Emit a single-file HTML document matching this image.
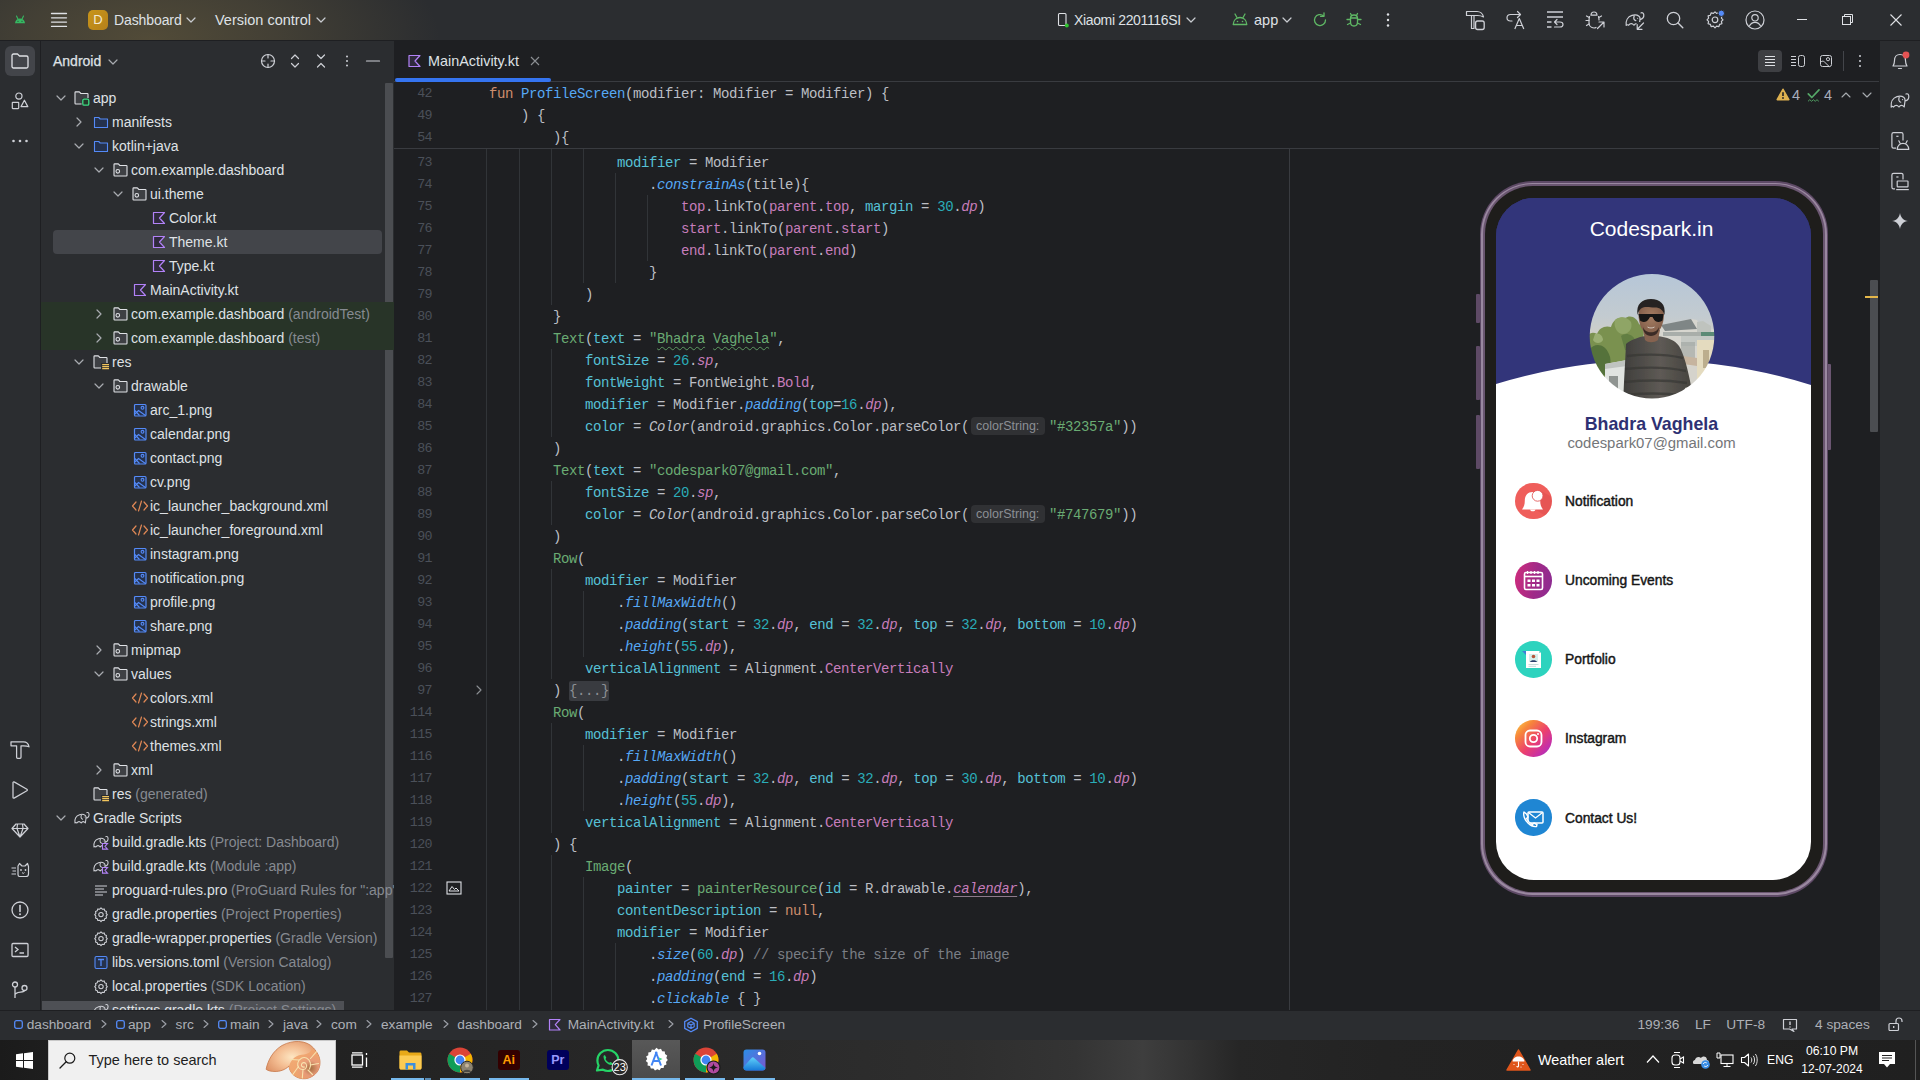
<!DOCTYPE html>
<html><head><meta charset="utf-8"><title>Android Studio</title>
<style>
html,body{margin:0;padding:0;}
body{width:1920px;height:1080px;overflow:hidden;background:#1E1F22;font-family:"Liberation Sans",sans-serif;}
#root{position:relative;width:1920px;height:1080px;overflow:hidden;}
.a{position:absolute;}
.ui{color:#DFE1E5;font-size:14px;white-space:pre;}
.g{color:#868A91;}
svg{position:absolute;overflow:visible;}
.ic{fill:none;stroke:#CED0D6;stroke-width:1.2;stroke-linecap:round;stroke-linejoin:round;}
/* code */
.code{position:absolute;font-family:"Liberation Mono",monospace;font-size:14px;letter-spacing:-0.4px;line-height:22px;color:#BCBEC4;white-space:pre;}
.k{color:#CF8E6D}.f{color:#56A8F5}.n{color:#56C1D6}.s{color:#6AAB73}.u{color:#2AACB8}
.e{color:#56A8F5;font-style:italic}.p{color:#C77DBB}.pi{color:#C77DBB;font-style:italic}
.c{color:#6AAB73}.it{font-style:italic}.cm{color:#7A7E85}
.ln{position:absolute;font-family:"Liberation Mono",monospace;font-size:13.3px;letter-spacing:-0.6px;line-height:22px;color:#4B5059;white-space:pre;text-align:right;width:60px;}
.wv{text-decoration:underline wavy #5E9A62;text-decoration-thickness:1px;text-underline-offset:3px;}
.ul{text-decoration:underline #8D7A8B;text-underline-offset:3px;}
.fold{background:#393B40;color:#8C8F94;border-radius:2px;padding:2px 0;}

</style></head>
<body>
<div id="root">
<!-- main toolbar -->
<div class="a" style="left:0;top:0;width:1920px;height:40px;background:#2B2D30;"></div>
<div class="a" style="left:0;top:0;width:700px;height:40px;background:radial-gradient(ellipse 290px 130px at 150px 40px, rgba(150,128,70,0.36) 0%, rgba(150,128,70,0.22) 45%, rgba(150,128,70,0) 100%);"></div>
<div class="a" style="left:0;top:40px;width:1920px;height:1px;background:#1E1F22;"></div>
<!-- android logo -->
<svg style="left:14px;top:15px" width="12" height="9" viewBox="0 0 12 9"><path d="M1 8.3 C1.2 5.5 3.3 3.6 6 3.6 C8.7 3.6 10.8 5.5 11 8.3 Z" fill="#36B862"/><path d="M2.5 1 L3.8 3.8 M9.5 1 L8.2 3.8" stroke="#36B862" stroke-width="1.1" stroke-linecap="round"/><circle cx="4" cy="6.3" r="0.55" fill="#2B2D30"/><circle cx="8" cy="6.3" r="0.55" fill="#2B2D30"/></svg>
<!-- hamburger -->
<svg style="left:50px;top:11px" width="18" height="18" viewBox="0 0 18 18"><path d="M1.5 2.5h15M1.5 6.8h15M1.5 11.1h15M1.5 15.4h15" fill="none" stroke="#DFE1E5" stroke-width="1.3" stroke-linecap="round"/></svg>
<!-- project badge -->
<div class="a" style="left:88px;top:10px;width:20px;height:20px;border-radius:5px;background:linear-gradient(135deg,#C8951A,#B5801A);"></div>
<div class="a" style="left:88px;top:10px;width:20px;height:20px;line-height:20px;text-align:center;color:#F4EBD4;font-size:13px;">D</div>
<div class="a ui" style="left:114px;top:8px;line-height:24px;font-size:14px;letter-spacing:-0.1px;">Dashboard</div>
<svg style="left:186px;top:15px" width="10" height="10" viewBox="0 0 10 10"><path d="M1 3 L5 7 L9 3" fill="none" stroke="#C9CCD1" stroke-width="1.2" stroke-linecap="round" stroke-linejoin="round"/></svg>
<div class="a ui" style="left:215px;top:8px;line-height:24px;font-size:14.5px;">Version control</div>
<svg style="left:316px;top:15px" width="10" height="10" viewBox="0 0 10 10"><path d="M1 3 L5 7 L9 3" fill="none" stroke="#C9CCD1" stroke-width="1.2" stroke-linecap="round" stroke-linejoin="round"/></svg>
<!-- device selector -->
<svg style="left:1056px;top:12px" width="14" height="16" viewBox="0 0 14 16"><rect x="2.5" y="1.5" width="7.5" height="12" rx="1" fill="none" stroke="#DFE1E5" stroke-width="1.1"/><circle cx="10.8" cy="13.6" r="2" fill="#2FC42F"/></svg>
<div class="a ui" style="left:1074px;top:8px;line-height:24px;font-size:14px;letter-spacing:-0.35px;">Xiaomi 2201116SI</div>
<svg style="left:1186px;top:15px" width="10" height="10" viewBox="0 0 10 10"><path d="M1 3 L5 7 L9 3" fill="none" stroke="#C9CCD1" stroke-width="1.2" stroke-linecap="round" stroke-linejoin="round"/></svg>
<svg style="left:1231px;top:12px" width="18" height="14" viewBox="0 0 18 14"><path d="M2.2 12.5 C2.5 8.2 5.3 5.5 9 5.5 C12.7 5.5 15.5 8.2 15.8 12.5 Z" fill="none" stroke="#5FB865" stroke-width="1.3" stroke-linejoin="round"/><path d="M4 2 L5.8 5.2 M14 2 L12.2 5.2" stroke="#5FB865" stroke-width="1.3" stroke-linecap="round"/><circle cx="6.5" cy="9.5" r="0.8" fill="#5FB865"/><circle cx="11.5" cy="9.5" r="0.8" fill="#5FB865"/></svg>
<div class="a ui" style="left:1254px;top:8px;line-height:24px;font-size:14.5px;">app</div>
<svg style="left:1282px;top:15px" width="10" height="10" viewBox="0 0 10 10"><path d="M1 3 L5 7 L9 3" fill="none" stroke="#C9CCD1" stroke-width="1.2" stroke-linecap="round" stroke-linejoin="round"/></svg>
<!-- rerun -->
<svg style="left:1312px;top:12px" width="16" height="16" viewBox="0 0 16 16"><path d="M13.5 8 A5.5 5.5 0 1 1 11.6 3.9" fill="none" stroke="#5FB865" stroke-width="1.3" stroke-linecap="round"/><path d="M12 0.8 V4.3 H8.5" fill="none" stroke="#5FB865" stroke-width="1.3" stroke-linecap="round" stroke-linejoin="round"/></svg>
<!-- debug -->
<svg style="left:1345px;top:11px" width="18" height="18" viewBox="0 0 18 18"><path d="M5.5 7.5 C5.5 5.2 7 4 9 4 C11 4 12.5 5.2 12.5 7.5 V11 C12.5 13.5 11 15 9 15 C7 15 5.5 13.5 5.5 11 Z" fill="none" stroke="#5FB865" stroke-width="1.3"/><path d="M6.5 4.5 L5.5 2.5 M11.5 4.5 L12.5 2.5 M5.5 8.5 H2 M12.5 8.5 H16 M5.5 12 L2.5 13.5 M12.5 12 L15.5 13.5 M5.5 7 H12.5" fill="none" stroke="#5FB865" stroke-width="1.3" stroke-linecap="round"/></svg>
<svg style="left:1380px;top:12px" width="16" height="16" viewBox="0 0 16 16"><circle cx="8" cy="2.5" r="1.2" fill="#DFE1E5"/><circle cx="8" cy="8" r="1.2" fill="#DFE1E5"/><circle cx="8" cy="13.5" r="1.2" fill="#DFE1E5"/></svg>
<!-- right toolbar icons -->
<svg style="left:1465px;top:10px" width="20" height="20" viewBox="0 0 20 20"><path d="M1.5 1.5 H12 C15 1.5 17.8 3.8 18.5 7 C16.8 6 14.8 5.5 12.5 5.5 H1.5 Z" fill="none" stroke="#CED0D6" stroke-width="1.2" stroke-linejoin="round"/><path d="M6.5 5.5 V18.5 H9 V5.5" fill="none" stroke="#CED0D6" stroke-width="1.2" stroke-linejoin="round"/><rect x="10.6" y="11" width="8.6" height="8.5" rx="2" fill="#2B2D30" stroke="#CED0D6" stroke-width="1.3"/></svg>
<svg style="left:1505px;top:10px" width="20" height="20" viewBox="0 0 20 20"><path d="M15.5 4.5 H5.5 C3.5 4.5 2 5.8 2 7.8 C2 9.8 3.5 11 5.5 11 H7 M12.5 1.5 L15.5 4.5 L12.5 7.5" fill="none" stroke="#CED0D6" stroke-width="1.2" stroke-linecap="round" stroke-linejoin="round"/><path d="M9.8 19 L14.3 8.5 L18.8 19 M11.3 15.5 H17.3" fill="none" stroke="#CED0D6" stroke-width="1.2" stroke-linejoin="round"/></svg>
<svg style="left:1545px;top:10px" width="20" height="20" viewBox="0 0 20 20"><path d="M2 2 H18 M2 7 H18 M2 12 H6.5 M2 17 H6.5" fill="none" stroke="#CED0D6" stroke-width="1.3"/><path d="M12 9.5 L9.5 12 L12 14.5 M9.5 12 H15 C16.7 12 18 13.1 18 14.5 C18 15.9 16.7 17 15 17 H9.5" fill="none" stroke="#CED0D6" stroke-width="1.2" stroke-linecap="round" stroke-linejoin="round"/></svg>
<svg style="left:1585px;top:10px" width="20" height="20" viewBox="0 0 20 20"><path d="M6 5.2 C6 3.3 7.4 2 9 2 C10.6 2 12 3.3 12 5.2 Z M4.5 6.5 C4 8 4 11 4 12.5 C4 15.5 6 18 9 18 C9.8 18 10.5 17.8 11 17.5 M13.5 6.5 C13.8 7.5 14 9 14 10" fill="none" stroke="#CED0D6" stroke-width="1.2" stroke-linecap="round" stroke-linejoin="round"/><path d="M4.2 7.5 L1.5 6 M13.8 7.5 L16.5 6 M4 10.5 H1 M4 14 L1.5 15.5" fill="none" stroke="#CED0D6" stroke-width="1.2" stroke-linecap="round"/><path d="M12.5 18.5 L18.5 12.5 M14 12 H19 V17" fill="none" stroke="#CED0D6" stroke-width="1.2" stroke-linecap="round" stroke-linejoin="round"/></svg>
<svg style="left:1625px;top:10px" width="20" height="20" viewBox="0 0 20 20"><g transform="translate(0,1) scale(1,0.95)"><path d="M1.2 15 C0.6 10.5 2.5 6 7 4.6 C10 3.7 12.3 4.2 14 5.5 C15 6.3 15.2 7.5 15 9 L14.2 15 C13.4 14 12.6 13.3 11.6 13.3 C10.6 13.3 9.6 14 9 15 C8.2 14 7.3 13.3 6.3 13.3 C5.3 13.3 4.2 14 3.6 15 C2.8 14.3 2 14.3 1.2 15 Z M15 9 C17.5 8.5 19 6.5 18.8 4 C18.6 2.3 17.3 1.3 16 2 M9.2 5.2 C8.3 7.6 8.8 9.6 10.8 10.2" fill="none" stroke="#CED0D6" stroke-width="1.25" stroke-linejoin="round" stroke-linecap="round"/><circle cx="12.6" cy="7.6" r="0.6" fill="#CED0D6"/></g><rect x="11.5" y="12" width="9" height="9" fill="#2B2D30"/><path d="M12.5 19 L18.5 13 M12.2 14.5 V19.3 H17" fill="none" stroke="#CED0D6" stroke-width="1.2" stroke-linecap="round" stroke-linejoin="round"/></svg>
<svg style="left:1665px;top:10px" width="20" height="20" viewBox="0 0 20 20"><circle cx="8.5" cy="8.5" r="6.2" fill="none" stroke="#CED0D6" stroke-width="1.3"/><path d="M13 13 L17.8 17.8" stroke="#CED0D6" stroke-width="1.4" stroke-linecap="round"/></svg>
<svg style="left:1705px;top:10px" width="20" height="20" viewBox="0 0 20 20"><path d="M10 1.8 L11.6 3.4 L13.9 2.9 L14.6 5.2 L16.9 5.9 L16.4 8.2 L18 9.8 L16.4 11.4 L16.9 13.7 L14.6 14.4 L13.9 16.7 L11.6 16.2 L10 17.8 L8.4 16.2 L6.1 16.7 L5.4 14.4 L3.1 13.7 L3.6 11.4 L2 9.8 L3.6 8.2 L3.1 5.9 L5.4 5.2 L6.1 2.9 L8.4 3.4 Z" fill="none" stroke="#CED0D6" stroke-width="1.2" stroke-linejoin="round"/><circle cx="10" cy="9.8" r="2.8" fill="none" stroke="#CED0D6" stroke-width="1.2"/><circle cx="16.3" cy="3.3" r="3.2" fill="#548AF7" stroke="#2B2D30" stroke-width="1"/></svg>
<svg style="left:1745px;top:10px" width="20" height="20" viewBox="0 0 20 20"><circle cx="10" cy="10" r="9" fill="none" stroke="#CED0D6" stroke-width="1.2"/><circle cx="10" cy="7.8" r="3.2" fill="none" stroke="#CED0D6" stroke-width="1.2"/><path d="M4.3 16.2 C5.5 13.5 7.5 12.3 10 12.3 C12.5 12.3 14.5 13.5 15.7 16.2" fill="none" stroke="#CED0D6" stroke-width="1.2"/></svg>
<!-- window controls -->
<div class="a" style="left:1797px;top:19px;width:10px;height:1px;background:#DFE1E5;"></div>
<svg style="left:1841px;top:13px" width="14" height="14" viewBox="0 0 14 14"><rect x="1.5" y="3.5" width="8" height="8" fill="none" stroke="#DFE1E5" stroke-width="1"/><path d="M3.5 3.5 V1.5 H11.5 V9.5 H9.5" fill="none" stroke="#DFE1E5" stroke-width="1"/></svg>
<svg style="left:1889px;top:13px" width="14" height="14" viewBox="0 0 14 14"><path d="M1.5 1.5 L12.5 12.5 M12.5 1.5 L1.5 12.5" fill="none" stroke="#DFE1E5" stroke-width="1.1"/></svg>

<div class="a" style="left:0;top:41px;width:40px;height:969px;background:#2B2D30;"></div>
<div class="a" style="left:40px;top:41px;width:1px;height:969px;background:#1E1F22;"></div>
<div class="a" style="left:5px;top:46px;width:30px;height:30px;border-radius:6px;background:#43454A;"></div>
<svg style="left:10px;top:51px" width="20" height="20" viewBox="0 0 20 20"><path d="M2 4.5 C2 3.7 2.7 3 3.5 3 H7.5 L9.5 5 H16.5 C17.3 5 18 5.7 18 6.5 V15.5 C18 16.3 17.3 17 16.5 17 H3.5 C2.7 17 2 16.3 2 15.5 Z" fill="none" stroke="#DFE1E5" stroke-width="1.3" stroke-linejoin="round"/></svg>
<svg style="left:10px;top:91px" width="20" height="20" viewBox="0 0 20 20"><circle cx="8.9" cy="5.1" r="3.1" fill="none" stroke="#CED0D6" stroke-width="1.2"/><rect x="2.3" y="11.3" width="6.4" height="6.3" rx="0.5" fill="none" stroke="#CED0D6" stroke-width="1.2"/><path d="M14.4 9.2 L17.8 15.6 H11 Z" fill="none" stroke="#CED0D6" stroke-width="1.2" stroke-linejoin="round"/></svg>
<svg style="left:10px;top:131px" width="20" height="20" viewBox="0 0 20 20"><circle cx="3.5" cy="10" r="1.3" fill="#CED0D6"/><circle cx="10" cy="10" r="1.3" fill="#CED0D6"/><circle cx="16.5" cy="10" r="1.3" fill="#CED0D6"/></svg>
<!-- bottom left strip icons -->
<svg style="left:10px;top:740px" width="20" height="20" viewBox="0 0 20 20"><path d="M1 1.8 H13.5 C16.5 1.8 18.5 3.8 19 6.8 C17.5 6 15.5 5.8 13.5 5.8 H11 V17.3 C11 17.9 10.6 18.3 10 18.3 H7.6 C7 18.3 6.6 17.9 6.6 17.3 V5.8 H1 Z" fill="none" stroke="#CED0D6" stroke-width="1.25" stroke-linejoin="round"/></svg>
<svg style="left:10px;top:780px" width="20" height="20" viewBox="0 0 20 20"><path d="M3 2.6 V17.4 C3 18 3.6 18.4 4.1 18.1 L16.9 10.8 C17.5 10.5 17.5 9.6 16.9 9.2 L4.1 1.9 C3.6 1.6 3 2 3 2.6 Z" fill="none" stroke="#CED0D6" stroke-width="1.25" stroke-linejoin="round"/></svg>
<svg style="left:10px;top:820px" width="20" height="20" viewBox="0 0 20 20"><path d="M6 4 H14 L18 8.5 L10 17 L2 8.5 Z M2 8.5 H18 M7 8.5 L10 17 L13 8.5 M7.5 4 L7 8.5 M12.5 4 L13 8.5" fill="none" stroke="#CED0D6" stroke-width="1.2" stroke-linejoin="round"/></svg>
<svg style="left:10px;top:860px" width="20" height="20" viewBox="0 0 20 20"><path d="M8 6 L9.5 3.5 L12 6 H15 L17.5 3.5 L18.5 6.5 V14 C18.5 15.5 17.5 16.5 16 16.5 H9.5 C8.5 16.5 8 15.5 8 14.5 Z" fill="none" stroke="#CED0D6" stroke-width="1.2" stroke-linejoin="round"/><path d="M1.5 8 H6 M2.5 11 H6 M1.5 14 H6" stroke="#CED0D6" stroke-width="1.2"/><circle cx="11" cy="10" r="0.9" fill="#CED0D6"/><circle cx="15.5" cy="10" r="0.9" fill="#CED0D6"/><path d="M12 12.5 L13.2 13.5 L14.5 12.5" fill="none" stroke="#CED0D6" stroke-width="1"/></svg>
<svg style="left:10px;top:900px" width="20" height="20" viewBox="0 0 20 20"><circle cx="10" cy="10" r="8" fill="none" stroke="#CED0D6" stroke-width="1.3"/><path d="M10 5.5 V11.5" stroke="#CED0D6" stroke-width="1.6" stroke-linecap="round"/><circle cx="10" cy="14.3" r="1" fill="#CED0D6"/></svg>
<svg style="left:10px;top:940px" width="20" height="20" viewBox="0 0 20 20"><rect x="2" y="3.5" width="16" height="13" rx="1" fill="none" stroke="#CED0D6" stroke-width="1.3"/><path d="M5 7 L8 9.5 L5 12 M9.5 13 H14" fill="none" stroke="#CED0D6" stroke-width="1.3"/></svg>
<svg style="left:10px;top:980px" width="20" height="20" viewBox="0 0 20 20"><circle cx="5" cy="4.5" r="2.5" fill="none" stroke="#CED0D6" stroke-width="1.3"/><circle cx="14.5" cy="8" r="2.5" fill="none" stroke="#CED0D6" stroke-width="1.3"/><path d="M5 7 V18 M5 15 C5 11 14.5 13 14.5 10.5" fill="none" stroke="#CED0D6" stroke-width="1.3"/></svg>

<div class="a" style="left:41px;top:41px;width:353px;height:969px;background:#2B2D30;"></div>
<div class="a" style="left:385px;top:83px;width:8px;height:875px;background:#4B4D51;border-radius:1px;"></div>
<div class="a" style="left:42px;top:1001px;width:302px;height:9px;background:rgba(85,87,92,0.85);"></div>
<!-- tree header -->
<div class="a ui" style="left:53px;top:49px;line-height:24px;color:#DFE1E5;-webkit-text-stroke:0.25px #DFE1E5;">Android</div>
<svg style="left:108px;top:57px" width="10" height="10" viewBox="0 0 10 10"><path d="M1 3 L5 7 L9 3" fill="none" stroke="#A8ABB0" stroke-width="1.2" stroke-linecap="round" stroke-linejoin="round"/></svg>
<svg style="left:260px;top:53px" width="16" height="16" viewBox="0 0 16 16"><circle cx="8" cy="8" r="6.5" class="ic"/><path d="M8 1.5v3.5M8 11v3.5M1.5 8h3.5M11 8h3.5" class="ic"/></svg>
<svg style="left:287px;top:53px" width="16" height="16" viewBox="0 0 16 16"><path d="M4.5 5.5 L8 2 L11.5 5.5 M4.5 10.5 L8 14 L11.5 10.5" class="ic"/></svg>
<svg style="left:313px;top:53px" width="16" height="16" viewBox="0 0 16 16"><path d="M4.5 2 L8 5.5 L11.5 2 M4.5 14 L8 10.5 L11.5 14" class="ic"/></svg>
<svg style="left:339px;top:53px" width="16" height="16" viewBox="0 0 16 16"><circle cx="8" cy="3.5" r="1" fill="#CED0D6"/><circle cx="8" cy="8" r="1" fill="#CED0D6"/><circle cx="8" cy="12.5" r="1" fill="#CED0D6"/></svg>
<svg style="left:365px;top:53px" width="16" height="16" viewBox="0 0 16 16"><path d="M1.5 8h13" class="ic"/></svg>

<!-- editor tab bar -->
<div class="a" style="left:394px;top:81px;width:1485px;height:1px;background:#393B40;"></div>
<div class="a" style="left:395px;top:78px;width:156px;height:4px;background:#3574F0;border-radius:2px;"></div>
<svg style="left:407px;top:53px" width="16" height="16" viewBox="0 0 16 16"><path d="M2 2.5 h11 l-5 5.5 l5 5.5 h-11 z" fill="#2F2A3D" stroke="#B282F7" stroke-width="1.2" stroke-linejoin="round"/></svg>
<div class="a ui" style="left:428px;top:49px;line-height:24px;font-size:14.4px;">MainActivity.kt</div>
<svg style="left:529px;top:55px" width="12" height="12" viewBox="0 0 12 12"><path d="M2 2 L10 10 M10 2 L2 10" fill="none" stroke="#8C8F94" stroke-width="1.1"/></svg>
<!-- tab bar right icons -->
<div class="a" style="left:1758px;top:50px;width:24px;height:22px;background:#3E3F43;border-radius:4px;"></div>
<svg style="left:1762px;top:53px" width="16" height="16" viewBox="0 0 16 16"><path d="M3 3.5h10M3 6.5h10M3 9.5h10M3 12.5h10" fill="none" stroke="#DFE1E5" stroke-width="1"/></svg>
<svg style="left:1790px;top:53px" width="16" height="16" viewBox="0 0 16 16"><path d="M1 3.5h5M1 6.5h5M1 9.5h5M1 12.5h5" fill="none" stroke="#CED0D6" stroke-width="1"/><rect x="8.5" y="2.5" width="6" height="11" rx="2" fill="none" stroke="#CED0D6" stroke-width="1"/></svg>
<svg style="left:1818px;top:53px" width="16" height="16" viewBox="0 0 16 16"><rect x="2.5" y="2.5" width="11" height="11" rx="2" fill="none" stroke="#CED0D6" stroke-width="1"/><circle cx="10" cy="6.2" r="1.6" fill="none" stroke="#CED0D6" stroke-width="1"/><path d="M2.8 9 C4.3 7.8 5.5 8 6.5 9 L11.5 13.8" fill="none" stroke="#CED0D6" stroke-width="1"/></svg>
<div class="a" style="left:1843px;top:51px;width:1px;height:20px;background:#43454A;"></div>
<svg style="left:1852px;top:53px" width="16" height="16" viewBox="0 0 16 16"><circle cx="8" cy="3" r="1" fill="#CED0D6"/><circle cx="8" cy="8" r="1" fill="#CED0D6"/><circle cx="8" cy="13" r="1" fill="#CED0D6"/></svg>
<!-- sticky border, margin line -->
<div class="a" style="left:394px;top:148px;width:1485px;height:1px;background:#393B40;"></div>
<div class="a" style="left:1289px;top:149px;width:1px;height:861px;background:#393B40;"></div>
<!-- inspection widget -->
<svg style="left:1776px;top:88px" width="14" height="13" viewBox="0 0 14 13"><path d="M7 1.3 L12.8 11.6 H1.2 Z" fill="#DDB04F" stroke="#DDB04F" stroke-width="1.6" stroke-linejoin="round"/><path d="M7 4.2v3.8" stroke="#1E1F22" stroke-width="1.6"/><circle cx="7" cy="10" r="0.9" fill="#1E1F22"/></svg>
<div class="a ui" style="left:1792px;top:83px;line-height:24px;font-size:14.5px;color:#A8ADBD;">4</div>
<svg style="left:1806px;top:87px" width="16" height="16" viewBox="0 0 16 16"><path d="M2.3 6.8 L5.8 10.5 L13 2.8" fill="none" stroke="#55A868" stroke-width="1.7" stroke-linecap="round" stroke-linejoin="round"/><path d="M2 14.3 l1.8 -1.6 l1.8 1.6 l1.8 -1.6 l1.8 1.6 l1.8 -1.6 l1.8 1.6" fill="none" stroke="#55A868" stroke-width="0.9"/></svg>
<div class="a ui" style="left:1824px;top:83px;line-height:24px;font-size:14.5px;color:#A8ADBD;">4</div>
<svg style="left:1841px;top:90px" width="10" height="10" viewBox="0 0 10 10"><path d="M1 7 L5 3 L9 7" fill="none" stroke="#A8ABB0" stroke-width="1.1" stroke-linecap="round" stroke-linejoin="round"/></svg>
<svg style="left:1862px;top:90px" width="10" height="10" viewBox="0 0 10 10"><path d="M1 3 L5 7 L9 3" fill="none" stroke="#A8ABB0" stroke-width="1.1" stroke-linecap="round" stroke-linejoin="round"/></svg>
<!-- editor scrollbar -->
<div class="a" style="left:1870px;top:280px;width:8px;height:152px;background:#4B4D51;border-radius:1px;"></div>
<div class="a" style="left:1865px;top:296px;width:13px;height:2px;background:#E5B74A;"></div>

<!-- phone preview -->
<div class="a" style="left:1475.6px;top:294px;width:4px;height:29px;background:#5E4A66;border-radius:1px;"></div>
<div class="a" style="left:1475.6px;top:346px;width:4px;height:54px;background:#5E4A66;border-radius:1px;"></div>
<div class="a" style="left:1475.6px;top:415px;width:4px;height:54px;background:#5E4A66;border-radius:1px;"></div>
<div class="a" style="left:1827px;top:364px;width:4px;height:86px;background:#6B5672;border-radius:1px;"></div>
<div class="a" style="left:1479.5px;top:181px;width:348.5px;height:715.5px;border-radius:53px;background:#5E4A66;"></div>
<div class="a" style="left:1481px;top:182.5px;width:345.5px;height:712.5px;border-radius:51.5px;background:#9A88A0;"></div>
<div class="a" style="left:1482.6px;top:184.1px;width:342.3px;height:709.3px;border-radius:50px;background:#6A5670;"></div>
<div class="a" style="left:1484.5px;top:186px;width:338.5px;height:705.5px;border-radius:48px;background:#1E1D1B;"></div>
<div class="a" style="left:1496px;top:198px;width:315px;height:681.5px;border-radius:38px;background:linear-gradient(to bottom,#32357A 0,#32357A 150px,#FFFFFF 150px);overflow:hidden;">
  <svg style="left:0;top:0" width="315" height="682" viewBox="0 0 315 682"><path d="M0 0 H315 V187 Q157 138 0 186 Z" fill="#32357A"/></svg>
  <div class="a" style="left:-2px;top:17px;width:315px;text-align:center;color:#FFFFFF;font-size:21px;line-height:28px;">Codespark.in</div>
  <div class="a" style="left:-2px;top:214px;width:315px;text-align:center;color:#2E3173;font-size:17.8px;font-weight:bold;line-height:24px;">Bhadra Vaghela</div>
  <div class="a" style="left:-2px;top:235px;width:315px;text-align:center;color:#747679;font-size:14.9px;line-height:20px;letter-spacing:0px;">codespark07@gmail.com</div>
</div>
<svg style="left:1585px;top:270px" width="135" height="135" viewBox="0 0 135 135">
  <defs>
    <clipPath id="pc"><circle cx="67" cy="66.3" r="62.3"/></clipPath><filter id="pblur" x="-5%" y="-5%" width="110%" height="110%"><feGaussianBlur stdDeviation="0.45"/></filter>
    <linearGradient id="sky" x1="0" y1="0" x2="0" y2="1"><stop offset="0" stop-color="#B4C6D9"/><stop offset="0.35" stop-color="#C3CBD0"/><stop offset="0.55" stop-color="#D6D0C4"/><stop offset="1" stop-color="#DCCDB6"/></linearGradient>
    <linearGradient id="swt" x1="0" y1="0" x2="1" y2="0"><stop offset="0" stop-color="#3F3E3C"/><stop offset="0.55" stop-color="#5E5A55"/><stop offset="1" stop-color="#46443F"/></linearGradient>
    <radialGradient id="face" cx="0.5" cy="0.45" r="0.6"><stop offset="0" stop-color="#A57D63"/><stop offset="1" stop-color="#7E5A47"/></radialGradient>
  </defs>
  <g clip-path="url(#pc)"><g filter="url(#pblur)">
    <rect x="-2" y="-2" width="139" height="139" fill="url(#sky)"/>
    <!-- building right -->
    <path d="M74 56 L106 49 L112 50 L118 62 L132 58 V135 H74 Z" fill="#D7D6CF"/>
    <path d="M76 55 L106 49 L112 59 L80 61 Z" fill="#7F8686"/>
    <path d="M78 62 H132 V66 H78 Z" fill="#A9AEAA"/>
    <path d="M112 52 L118 51 L126 56 V62 H112 Z" fill="#BFC3BE"/>
    <path d="M116 62 H132 V68 H116 Z" fill="#5C8A76"/>
    <path d="M96 66 H132 V76 H96 Z" fill="#C4C8C4"/>
    <path d="M96 72 V90 H110 V72 Z" fill="#9EA3A0" opacity="0.6"/>
    <path d="M112 70 H132 V135 H112 Z" fill="#E4DBBF"/>
    <path d="M118 80 H124 V98 H118 Z" fill="#BCAE8E"/>
    <path d="M98 86 L112 88 V96 L98 94 Z" fill="#C6B49F"/>
    <path d="M100 96 H112 V135 H100 Z" fill="#D5D3CC"/>
    <!-- trees -->
    <path d="M3 66 C5 62 9 62 12 64 C14 58 20 55 26 57 C28 50 34 46 40 48 C46 44 52 48 54 54 C58 56 60 62 58 68 C58 76 54 84 48 90 L40 94 L30 104 L18 114 L5 118 L2 100 Z" fill="#7A9150"/>
    <path d="M30 50 C34 46 42 46 46 52 C48 58 44 64 38 64 C32 64 28 56 30 50 Z" fill="#8FA566"/>
    <path d="M4 80 C10 72 20 74 24 84 C28 92 24 104 14 110 L4 108 Z" fill="#55723A"/>
    <path d="M36 66 C40 62 48 64 50 70 C52 76 46 82 40 80 Z" fill="#627E43"/>
    <path d="M10 64 C14 62 18 66 18 70 C16 74 10 74 8 70 Z" fill="#9BAF73"/>
    <!-- low building left -->
    <path d="M20 94 L42 90 L44 124 L20 126 Z" fill="#E0E3E0"/>
    <path d="M20 94 L42 90 L42 96 L20 99 Z" fill="#BFC3C0"/>
    <path d="M24 106 H33 V124 H24 Z" fill="#8F9491"/>
    <!-- person -->
    <path d="M41 74 C45 70 54 67 60 66 L72 66 C82 67 90 70 94 76 C99 84 103 100 106 116 L100 118 L97 135 H38 L39 112 L40 94 Z" fill="url(#swt)"/>
    <path d="M42 86 C60 84 80 84 98 88 M40 99 C60 97 82 97 101 101 M40 112 C60 110 82 110 102 113 M40 125 C60 123 82 123 100 126" stroke="#363533" stroke-width="2.4" fill="none" opacity="0.65"/>
    <path d="M58 60 H75 L73 70 C69 73 63 73 60 70 Z" fill="#86624F"/>
    <path d="M53.5 44 C53.5 36 59 32 66 32 C73 32 79 36 79 44 C79 54 75 64 66 65 C57 64 53.5 54 53.5 44 Z" fill="url(#face)"/>
    <path d="M52.5 45 C51 34 57 29 66 29 C75 29 81 34 79.5 45 C78 40 75 37.5 70 37.5 C65 37.5 62 36.5 58 37.5 C55 38.5 53.5 41 52.5 45 Z" fill="#262322"/>
    <path d="M53.5 44 H78.5 L77.5 50.5 C75.5 52.5 71 52.5 69.3 50 L67.5 47 H65 L63 50 C61.3 52.5 57 52.5 55 50.5 Z" fill="#121212"/>
    <path d="M58 57 C60 64 72 64 74 57 C74 62 71 66 66 66 C61 66 58 62 58 57 Z" fill="#3A2C25"/>
    <path d="M62.5 57 C64.5 58.3 67.5 58.3 69.5 57" stroke="#D8CFC6" stroke-width="0.9" fill="none"/>
  </g></g>
</svg>
<!-- menu items -->
<div class="a" style="left:1515px;top:482.5px;width:36.6px;height:36.6px;border-radius:50%;background:#EF5E5B;"></div>
<svg style="left:1515px;top:482.5px" width="37" height="37" viewBox="0 0 37 37"><defs><clipPath id="bc"><circle cx="18.3" cy="18.3" r="18.3"/></clipPath></defs><path d="M18 25 L37 37 L37 14 L26 8 Z" fill="#DE4E4E" opacity="0.55" clip-path="url(#bc)"/><path d="M7 26.4 C9 24 9.8 21.5 9.8 17.5 C9.8 12 13 8.9 17.5 8.9 C22 8.9 25.2 12 25.2 17.5 C25.2 21.5 26 24 28 26.4 Z" fill="#FFFFFF"/><path d="M15 26.4 C15.5 29 20 29 20.5 26.4 Z" fill="#FFFFFF"/><circle cx="22.6" cy="12.8" r="5.4" fill="#FFFFFF" stroke="#E25A5A" stroke-width="0.9"/></svg>
<div class="a" style="left:1515px;top:562px;width:36.6px;height:36.6px;border-radius:50%;background:linear-gradient(100deg,#D02C7C 0%,#A02A88 55%,#8A2C92 100%);"></div>
<svg style="left:1515px;top:562px" width="37" height="37" viewBox="0 0 37 37"><rect x="9.5" y="10.5" width="18" height="17" rx="1.5" fill="none" stroke="#FFFFFF" stroke-width="1.6"/><path d="M9.5 14.5 H27.5" stroke="#FFFFFF" stroke-width="1.6"/><path d="M12.5 9 V12 M16 9 V12 M19.5 9 V12 M23 9 V12" stroke="#FFFFFF" stroke-width="1.3"/><path d="M12.5 17.5h3v2.5h-3zM17 17.5h3v2.5h-3zM21.5 17.5h3v2.5h-3zM12.5 22h3v2.5h-3zM17 22h3v2.5h-3zM21.5 22h3v2.5h-3z" fill="#FFFFFF"/></svg>
<div class="a" style="left:1515px;top:641px;width:36.6px;height:36.6px;border-radius:50%;background:#2DD3BE;"></div>
<svg style="left:1515px;top:641px" width="37" height="37" viewBox="0 0 37 37"><path d="M11 10 H24 L26 12 V27 H11 Z" fill="#FFFFFF"/><path d="M24 10 V12 H26" fill="#9BD8CF"/><rect x="14" y="13" width="9" height="8" fill="#D6EFEC"/><circle cx="18.5" cy="15.5" r="1.8" fill="#B5563A"/><path d="M15 21 C15.5 18.5 21.5 18.5 22 21 Z" fill="#2B3E6B"/><path d="M13.5 23.5 H23.5 M13.5 25.3 H21" stroke="#BFD8D5" stroke-width="0.9"/><path d="M7 10 L11 10 L11 14 Z" fill="#3D7ED6"/></svg>
<div class="a" style="left:1515px;top:720px;width:36.6px;height:36.6px;border-radius:50%;background:linear-gradient(135deg,#FCD84A 0%,#F7873A 25%,#EC3F6E 55%,#C530A8 80%,#8E3ACB 100%);"></div>
<svg style="left:1515px;top:720px" width="37" height="37" viewBox="0 0 37 37"><rect x="10.5" y="10.5" width="16" height="16" rx="4.5" fill="none" stroke="#FFFFFF" stroke-width="1.8"/><circle cx="18.5" cy="18.5" r="3.7" fill="none" stroke="#FFFFFF" stroke-width="1.8"/><circle cx="23" cy="14" r="1" fill="#FFFFFF"/></svg>
<div class="a" style="left:1515px;top:799px;width:36.6px;height:36.6px;border-radius:50%;background:#1F86D3;"></div>
<svg style="left:1515px;top:799px" width="37" height="37" viewBox="0 0 37 37"><rect x="13" y="13" width="15" height="11" rx="1" fill="none" stroke="#FFFFFF" stroke-width="1.5"/><path d="M13.5 13.5 L20.5 19 L27.5 13.5" fill="none" stroke="#FFFFFF" stroke-width="1.3"/><path d="M9 13 C8 16 9.5 21 13 24 C16 27 19 28 21.5 27.5 L22 25.5 L19 24 L17.5 25.5 C15.5 24.5 12.5 21.5 11.5 19.5 L13 18 L11.5 15 Z" fill="#1F86D3" stroke="#FFFFFF" stroke-width="1.4" stroke-linejoin="round"/></svg>
<div class="a" style="left:1565px;top:489.8px;line-height:24px;font-size:13.8px;color:#161616;-webkit-text-stroke:0.45px #161616;white-space:pre;">Notification</div>
<div class="a" style="left:1565px;top:569px;line-height:24px;font-size:13.8px;color:#161616;-webkit-text-stroke:0.45px #161616;white-space:pre;">Uncoming Events</div>
<div class="a" style="left:1565px;top:648px;line-height:24px;font-size:13.8px;color:#161616;-webkit-text-stroke:0.45px #161616;white-space:pre;">Portfolio</div>
<div class="a" style="left:1565px;top:727.3px;line-height:24px;font-size:13.8px;color:#161616;-webkit-text-stroke:0.45px #161616;white-space:pre;">Instagram</div>
<div class="a" style="left:1565px;top:806.5px;line-height:24px;font-size:13.8px;color:#161616;-webkit-text-stroke:0.45px #161616;white-space:pre;">Contact Us!</div>

<div class="a" style="left:1880px;top:41px;width:40px;height:969px;background:#2B2D30;"></div>
<div class="a" style="left:1879px;top:41px;width:1px;height:969px;background:#1E1F22;"></div>
<svg style="left:1890px;top:51px" width="20" height="20" viewBox="0 0 20 20"><path d="M3 15 C4 13.5 4.5 12 4.5 9.5 C4.5 6 6.5 3.5 10 3.5 C13.5 3.5 15.5 6 15.5 9.5 C15.5 12 16 13.5 17 15 Z" fill="none" stroke="#CED0D6" stroke-width="1.2" stroke-linejoin="round"/><path d="M8.5 17.5 H11.5" stroke="#CED0D6" stroke-width="1.2" stroke-linecap="round"/><circle cx="16" cy="4" r="3.4" fill="#E55353"/></svg>
<svg style="left:1890px;top:92px" width="20" height="20" viewBox="0 0 20 20"><path d="M1.2 15 C0.6 10.5 2.5 6 7 4.6 C10 3.7 12.3 4.2 14 5.5 C15 6.3 15.2 7.5 15 9 L14.2 15 C13.4 14 12.6 13.3 11.6 13.3 C10.6 13.3 9.6 14 9 15 C8.2 14 7.3 13.3 6.3 13.3 C5.3 13.3 4.2 14 3.6 15 C2.8 14.3 2 14.3 1.2 15 Z M15 9 C17.5 8.5 19 6.5 18.8 4 C18.6 2.3 17.3 1.3 16 2 M9.2 5.2 C8.3 7.6 8.8 9.6 10.8 10.2" fill="none" stroke="#CED0D6" stroke-width="1.2" stroke-linejoin="round" stroke-linecap="round"/><circle cx="12.6" cy="7.6" r="0.6" fill="#CED0D6"/></svg>
<svg style="left:1890px;top:131px" width="20" height="20" viewBox="0 0 20 20"><path d="M13 9.5 V3.2 C13 2.3 12.3 1.6 11.4 1.6 H3.5 C2.6 1.6 1.9 2.3 1.9 3.2 V15.5 C1.9 16.4 2.6 17.1 3.5 17.1 H6" fill="none" stroke="#CED0D6" stroke-width="1.2"/><path d="M6.3 5.3 H8.5" stroke="#CED0D6" stroke-width="1.2"/><path d="M7.2 18.4 C7.5 14.8 9.9 12.3 13 12.3 C16.1 12.3 18.5 14.8 18.8 18.4 Z M8.8 9.8 L10.2 12.6 M17.2 9.8 L15.8 12.6" fill="none" stroke="#CED0D6" stroke-width="1.2" stroke-linejoin="round" stroke-linecap="round"/></svg>
<svg style="left:1890px;top:171px" width="20" height="20" viewBox="0 0 20 20"><path d="M13 8.5 V3.9 C13 3 12.3 2.3 11.4 2.3 H3.5 C2.6 2.3 1.9 3 1.9 3.9 V16.3 C1.9 17.2 2.6 17.9 3.5 17.9 H5" fill="none" stroke="#CED0D6" stroke-width="1.2"/><path d="M6.3 6 H8.5" stroke="#CED0D6" stroke-width="1.2"/><rect x="7.2" y="10" width="10.8" height="5.8" rx="0.6" fill="none" stroke="#CED0D6" stroke-width="1.2"/><path d="M6.2 18.6 H18.8" stroke="#CED0D6" stroke-width="1.2"/></svg>
<svg style="left:1890px;top:211px" width="20" height="20" viewBox="0 0 20 20"><path d="M10 2 C10.6 6.5 13.5 9.4 18 10 C13.5 10.6 10.6 13.5 10 18 C9.4 13.5 6.5 10.6 2 10 C6.5 9.4 9.4 6.5 10 2 Z" fill="#CED0D6"/></svg>

<div class="a" style="left:0;top:1010px;width:1920px;height:30px;background:#2B2D30;"></div>
<div class="a" style="left:0;top:1010px;width:1920px;height:1px;background:#1E1F22;"></div>
<div class="a" style="left:0;top:1013px;width:1920px;height:24px;font-size:13.7px;line-height:24px;color:#ADB0B6;white-space:pre;">
<svg style="left:14px;top:7.3px" width="9" height="9" viewBox="0 0 9 9"><rect x="0.7" y="0.7" width="7.6" height="7.6" rx="1.8" fill="none" stroke="#548AF7" stroke-width="1.3"/></svg>
<div class="a" style="left:26.7px;top:0">dashboard</div>
<svg style="left:116px;top:7.3px" width="9" height="9" viewBox="0 0 9 9"><rect x="0.7" y="0.7" width="7.6" height="7.6" rx="1.8" fill="none" stroke="#548AF7" stroke-width="1.3"/></svg>
<div class="a" style="left:128px;top:0">app</div>
<div class="a" style="left:175.6px;top:0">src</div>
<svg style="left:218px;top:7.3px" width="9" height="9" viewBox="0 0 9 9"><rect x="0.7" y="0.7" width="7.6" height="7.6" rx="1.8" fill="none" stroke="#548AF7" stroke-width="1.3"/></svg>
<div class="a" style="left:230px;top:0">main</div>
<div class="a" style="left:283px;top:0">java</div>
<div class="a" style="left:331px;top:0">com</div>
<div class="a" style="left:381px;top:0">example</div>
<div class="a" style="left:457.3px;top:0">dashboard</div>
<svg style="left:548px;top:5px" width="14" height="14" viewBox="0 0 14 14"><path d="M1.5 1.5 h10.5 l-4.7 5.2 l4.7 5.3 h-10.5 z" fill="#2F2A3D" stroke="#B282F7" stroke-width="1.2" stroke-linejoin="round"/></svg>
<div class="a" style="left:567.7px;top:0">MainActivity.kt</div>
<svg style="left:683px;top:4px" width="16" height="16" viewBox="0 0 16 16"><path d="M8 1.2 L14.3 4.6 V11.4 L8 14.8 L1.7 11.4 V4.6 Z" fill="none" stroke="#548AF7" stroke-width="1.3" stroke-linejoin="round"/><path d="M4.8 6.3 L8 4.6 L11.2 6.3 V9.7 L8 11.4 L4.8 9.7 Z M4.8 6.3 L8 8 L11.2 6.3 M8 8 V11.4" fill="none" stroke="#548AF7" stroke-width="1.1" stroke-linejoin="round"/></svg>
<div class="a" style="left:703px;top:0">ProfileScreen</div>
<svg style="left:100px;top:6.3px" width="8" height="10" viewBox="0 0 8 10"><path d="M2 1.5 L6 5 L2 8.5" fill="none" stroke="#9DA0A8" stroke-width="1.1" stroke-linecap="round" stroke-linejoin="round"/></svg><svg style="left:159.5px;top:6.3px" width="8" height="10" viewBox="0 0 8 10"><path d="M2 1.5 L6 5 L2 8.5" fill="none" stroke="#9DA0A8" stroke-width="1.1" stroke-linecap="round" stroke-linejoin="round"/></svg><svg style="left:202px;top:6.3px" width="8" height="10" viewBox="0 0 8 10"><path d="M2 1.5 L6 5 L2 8.5" fill="none" stroke="#9DA0A8" stroke-width="1.1" stroke-linecap="round" stroke-linejoin="round"/></svg><svg style="left:266.7px;top:6.3px" width="8" height="10" viewBox="0 0 8 10"><path d="M2 1.5 L6 5 L2 8.5" fill="none" stroke="#9DA0A8" stroke-width="1.1" stroke-linecap="round" stroke-linejoin="round"/></svg><svg style="left:315px;top:6.3px" width="8" height="10" viewBox="0 0 8 10"><path d="M2 1.5 L6 5 L2 8.5" fill="none" stroke="#9DA0A8" stroke-width="1.1" stroke-linecap="round" stroke-linejoin="round"/></svg><svg style="left:365px;top:6.3px" width="8" height="10" viewBox="0 0 8 10"><path d="M2 1.5 L6 5 L2 8.5" fill="none" stroke="#9DA0A8" stroke-width="1.1" stroke-linecap="round" stroke-linejoin="round"/></svg><svg style="left:441.5px;top:6.3px" width="8" height="10" viewBox="0 0 8 10"><path d="M2 1.5 L6 5 L2 8.5" fill="none" stroke="#9DA0A8" stroke-width="1.1" stroke-linecap="round" stroke-linejoin="round"/></svg><svg style="left:531px;top:6.3px" width="8" height="10" viewBox="0 0 8 10"><path d="M2 1.5 L6 5 L2 8.5" fill="none" stroke="#9DA0A8" stroke-width="1.1" stroke-linecap="round" stroke-linejoin="round"/></svg><svg style="left:666.5px;top:6.3px" width="8" height="10" viewBox="0 0 8 10"><path d="M2 1.5 L6 5 L2 8.5" fill="none" stroke="#9DA0A8" stroke-width="1.1" stroke-linecap="round" stroke-linejoin="round"/></svg>
<div class="a" style="left:1637.5px;top:0">199:36</div>
<div class="a" style="left:1695px;top:0">LF</div>
<div class="a" style="left:1726.3px;top:0">UTF-8</div>
<svg style="left:1782px;top:4px" width="16" height="16" viewBox="0 0 16 16"><path d="M1.5 2.5 H14.5 V12 H10 L12 14.5 L7.5 12 H1.5 Z" fill="none" stroke="#CED0D6" stroke-width="1.2" stroke-linejoin="round"/><path d="M8 4.5 V8" stroke="#CED0D6" stroke-width="1.4"/><circle cx="8" cy="10" r="0.7" fill="#CED0D6"/></svg>
<div class="a" style="left:1815px;top:0">4 spaces</div>
<svg style="left:1887px;top:3px" width="16" height="16" viewBox="0 0 16 16"><rect x="2" y="7.5" width="9.5" height="7" rx="1" fill="none" stroke="#CED0D6" stroke-width="1.2"/><path d="M9 7.5 V5 C9 3.3 10.3 2 12 2 C13.7 2 15 3.3 15 5 V6" fill="none" stroke="#CED0D6" stroke-width="1.2"/><path d="M6.7 10 V12" stroke="#CED0D6" stroke-width="1.3"/></svg>
</div>

<div class="a" style="left:0;top:1040px;width:1920px;height:40px;background:linear-gradient(90deg,#1B1B1B 0%,#1E1E1E 2.5%,#222222 17.5%,#2A2A2A 40%,#2E2E2E 50%,#343434 56%,#3E3E3E 59.5%,#333333 62%,#262626 64.5%,#232323 72%,#202020 100%);"></div>
<!-- windows logo -->
<svg style="left:15.5px;top:1051.5px" width="17" height="17" viewBox="0 0 17 17"><path d="M0 2.3 L7 1.3 V8 H0 Z M8 1.15 L17 0 V8 H8 Z M0 9 H7 V15.7 L0 14.7 Z M8 9 H17 V17 L8 15.85 Z" fill="#FFFFFF"/></svg>
<!-- search box -->
<div class="a" style="left:48px;top:1040px;width:288px;height:40px;background:#F0F0F0;box-sizing:border-box;border:1px solid #C8C8C8;border-bottom:0;"></div>
<svg style="left:59px;top:1052px" width="18" height="17" viewBox="0 0 18 17"><circle cx="10.8" cy="6.2" r="5" fill="none" stroke="#1A1A1A" stroke-width="1.2"/><path d="M7.2 9.8 L1 16" stroke="#1A1A1A" stroke-width="1.3" stroke-linecap="round"/></svg>
<div class="a" style="left:88.5px;top:1048px;line-height:24px;font-size:14.5px;color:#1E1E1E;white-space:pre;">Type here to search</div>
<svg style="left:258px;top:1040px" width="70" height="40" viewBox="0 0 70 40">
  <defs><radialGradient id="shl" cx="0.48" cy="0.42" r="0.62"><stop offset="0" stop-color="#FDE6C2"/><stop offset="0.45" stop-color="#F4BE93"/><stop offset="1" stop-color="#D98A5E"/></radialGradient>
  <radialGradient id="shl2" cx="0.7" cy="0.65" r="0.5"><stop offset="0" stop-color="#9E6A3C"/><stop offset="0.5" stop-color="#E79A78"/><stop offset="1" stop-color="#F0A46C"/></radialGradient></defs>
  <path d="M8.1 29.3 C10 20 15 11 24 5.5 C30 2.2 36 1.3 40.7 1.5 C47 1.8 52 4 55.5 8 C59.5 12.5 62 17 62 22.5 C62 30 57.5 36 50 38.2 C43 40 36 37 33 32 C31.5 29.5 31 27.5 31.1 25.9 C27 30 22 31.5 17 31.5 C13 31.5 10 30.8 8.1 29.3 Z" fill="url(#shl)" stroke="#C8794A" stroke-width="0.8"/>
  <path d="M31.1 25.9 C33 19 39 14.5 46 14.5 C50 14 53 12 54 8.5 C59.5 12.5 62 17 62 22.5 C62 30 57.5 36 50 38.2 C43 40 36 37 33 32 C31.5 29.5 31 27.5 31.1 25.9 Z" fill="url(#shl2)" opacity="0.9"/>
  <path d="M46.5 27 C44.5 27.5 43 26 43.5 24.3 C44 22.5 46.5 22 47.8 23.5 C49.5 25.5 48.5 29 45.5 29.5 C41.5 30 39 26.5 39.8 23 C40.6 19 45 16.5 48.5 18 C52.5 19.8 53.5 25 51.5 29 M52.5 18.5 L58.5 11.7 M52.3 25 L60.5 23.5 M50 30 L54.5 34.5 M45 29.5 L44.3 38 M40.5 26.5 L34.8 34.5 M41 20 L33 19.5" fill="none" stroke="#F8E2AE" stroke-width="1.1" stroke-linecap="round"/>
</svg>
<!-- task view -->
<svg style="left:351px;top:1051.5px" width="18" height="16" viewBox="0 0 18 16"><rect x="1" y="3" width="10.5" height="10" fill="none" stroke="#FFFFFF" stroke-width="1.3"/><path d="M1 0.8 H11.5 M1 15.2 H11.5 M15.5 1 V3 M15.5 5.5 V15" fill="none" stroke="#FFFFFF" stroke-width="1.3"/></svg>
<!-- explorer -->
<svg style="left:399px;top:1050px" width="23" height="20" viewBox="0 0 23 20"><path d="M0.5 2 C0.5 1.2 1.2 0.5 2 0.5 H8 L10 2.5 H21 C21.8 2.5 22.5 3.2 22.5 4 V18 C22.5 18.8 21.8 19.5 21 19.5 H2 C1.2 19.5 0.5 18.8 0.5 18 Z" fill="#E8A919"/><path d="M0.5 5.5 H22.5 V18 C22.5 18.8 21.8 19.5 21 19.5 H2 C1.2 19.5 0.5 18.8 0.5 18 Z" fill="#FCCB53"/><path d="M6.5 19.5 V13 H16.5 V19.5 H14 V15.5 H9 V19.5 Z" fill="#3C8FDD"/></svg>
<!-- chrome 1 -->
<svg style="left:447px;top:1047px" width="28" height="28" viewBox="0 0 28 28"><circle cx="13" cy="13" r="12.5" fill="#DB4437"/><path d="M13 13 L2.2 6.8 A12.5 12.5 0 0 0 13 25.5 Z" fill="#0F9D58"/><path d="M13 13 L13 25.5 A12.5 12.5 0 0 0 23.8 6.8 Z" fill="#F4B400"/><circle cx="13" cy="13" r="5.6" fill="#FFFFFF"/><circle cx="13" cy="13" r="4.4" fill="#4285F4"/><circle cx="20" cy="20.5" r="6.3" fill="#8C8370" stroke="#2a2a2a" stroke-width="1"/><circle cx="20" cy="18.5" r="2" fill="#C5B59A"/><path d="M16 25 C16.5 22 23.5 22 24 25" fill="#4C4A44"/></svg>
<!-- Ai -->
<div class="a" style="left:498px;top:1049.5px;width:21.5px;height:20.5px;border-radius:3px;background:#330000;"></div>
<div class="a" style="left:498px;top:1049.5px;width:21.5px;line-height:20.5px;text-align:center;font-size:12.5px;font-weight:bold;color:#FF9A00;">Ai</div>
<!-- Pr -->
<div class="a" style="left:547px;top:1049.5px;width:21.5px;height:20.5px;border-radius:3px;background:#00005B;"></div>
<div class="a" style="left:547px;top:1049.5px;width:21.5px;line-height:20.5px;text-align:center;font-size:12.5px;font-weight:bold;color:#9999FF;">Pr</div>
<!-- whatsapp -->
<svg style="left:594px;top:1048px" width="38" height="28" viewBox="0 0 38 28"><path d="M3 22.5 L4.6 17.5 C3.8 16 3.4 14.3 3.4 12.5 C3.4 6.7 8.1 2 13.9 2 C19.7 2 24.4 6.7 24.4 12.5 C24.4 18.3 19.7 23 13.9 23 C12.1 23 10.4 22.5 9 21.7 Z" fill="none" stroke="#25D366" stroke-width="2.2" stroke-linejoin="round"/><path d="M9.5 8.5 C9.5 7.5 10.5 7 11 7.3 L12.3 9.8 L11.5 11 C12.3 12.8 13.6 14 15.2 14.8 L16.4 13.9 L18.8 15.2 C19.1 15.8 18.5 16.8 17.5 16.9 C13.5 17 9.5 12.8 9.5 8.5 Z" fill="#25D366"/><circle cx="25.7" cy="19.2" r="7.6" fill="#2A2A2A" stroke="#E8E8E8" stroke-width="1.1"/><text x="25.7" y="23.3" text-anchor="middle" font-family="Liberation Sans" font-size="11" fill="#FFFFFF">23</text></svg>
<!-- android studio selected -->
<div class="a" style="left:632.4px;top:1040px;width:47.7px;height:40px;background:linear-gradient(#585858,#4A4A4A);"></div>
<svg style="left:644px;top:1047px" width="25" height="25" viewBox="0 0 25 25"><path d="M12.5 0.8 L14.5 2.5 L17 1.8 L18.2 4.2 L20.8 4.5 L21 7.1 L23.2 8.5 L22.3 11 L23.8 13 L22 15 L22.5 17.6 L20.1 18.5 L19.6 21.1 L17 21 L15.6 23.3 L13.3 22.2 L11 23.5 L9.4 21.4 L6.8 21.6 L6 19.1 L3.5 18.4 L3.8 15.8 L1.8 14.1 L3.2 11.9 L2.1 9.5 L4.3 8.2 L4.3 5.6 L6.9 5.1 L7.9 2.6 L10.4 3 Z" fill="#FFFFFF"/><path d="M7.5 18.5 L12.2 6 L17 18.5 M9.3 14 H15.2" fill="none" stroke="#4285F4" stroke-width="2" stroke-linejoin="round"/><circle cx="12.2" cy="5.7" r="1.3" fill="#4285F4"/><path d="M15 10.5 L18.5 12 L15.5 13.5 Z" fill="#3DDC84"/></svg>
<!-- chrome 2 -->
<svg style="left:693px;top:1047px" width="28" height="28" viewBox="0 0 28 28"><circle cx="13" cy="13" r="12.5" fill="#DB4437"/><path d="M13 13 L2.2 6.8 A12.5 12.5 0 0 0 13 25.5 Z" fill="#0F9D58"/><path d="M13 13 L13 25.5 A12.5 12.5 0 0 0 23.8 6.8 Z" fill="#F4B400"/><circle cx="13" cy="13" r="5.6" fill="#FFFFFF"/><circle cx="13" cy="13" r="4.4" fill="#4285F4"/><circle cx="20.5" cy="20.5" r="6.5" fill="#B04A9E" stroke="#1a1a1a" stroke-width="1.2"/><path d="M20.5 16 C21 19 22 20 25 20.5 C22 21 21 22 20.5 25 C20 22 19 21 16 20.5 C19 20 20 19 20.5 16 Z" fill="#1a1a1a"/></svg>
<!-- photos -->
<svg style="left:743px;top:1049px" width="23" height="22" viewBox="0 0 23 22"><defs><linearGradient id="ph" x1="0" y1="0" x2="1" y2="1"><stop offset="0" stop-color="#2B8FE6"/><stop offset="1" stop-color="#7C55D0"/></linearGradient><linearGradient id="ph2" x1="0" y1="0" x2="0" y2="1"><stop offset="0" stop-color="#5FD0FA"/><stop offset="1" stop-color="#1779D8"/></linearGradient></defs><rect x="0.5" y="0.5" width="22" height="21" rx="3" fill="url(#ph)"/><path d="M0.5 18 L8.5 9 C9.3 8.1 10.4 8.1 11.2 9 L22.5 19 V18.5 C22.5 20.2 21.2 21.5 19.5 21.5 H3.5 C1.8 21.5 0.5 20.2 0.5 18.5 Z" fill="url(#ph2)"/><circle cx="16.5" cy="4.5" r="1.8" fill="#FFFFFF"/></svg>
<!-- underlines -->
<div class="a" style="left:390.5px;top:1078px;width:33px;height:2px;background:#76B9ED;"></div>
<div class="a" style="left:425px;top:1078px;width:5.5px;height:2px;background:#5A8CB5;"></div>
<div class="a" style="left:440px;top:1078px;width:40px;height:2px;background:#76B9ED;"></div>
<div class="a" style="left:489px;top:1078px;width:40px;height:2px;background:#76B9ED;"></div>
<div class="a" style="left:632.4px;top:1078px;width:47.7px;height:2px;background:#76B9ED;"></div>
<div class="a" style="left:685px;top:1078px;width:40px;height:2px;background:#76B9ED;"></div>
<div class="a" style="left:734px;top:1078px;width:40.5px;height:2px;background:#76B9ED;"></div>
<!-- tray -->
<svg style="left:1505.5px;top:1048.5px" width="25" height="22" viewBox="0 0 25 22"><path d="M12.5 1 L24 21 H1 Z" fill="#E0561B" stroke="#E0561B" stroke-width="1.5" stroke-linejoin="round"/><path d="M6.5 12.5 C7 9 9.5 7.5 12.5 7.5 C15.5 7.5 18 9 18.5 12.5 Z" fill="#FFFFFF"/><path d="M12.5 12.5 V17 C12.5 18 11 18.3 10.7 17.2" fill="none" stroke="#FFFFFF" stroke-width="1.1"/><circle cx="8" cy="15.5" r="0.6" fill="#FFF"/><circle cx="17" cy="15.5" r="0.6" fill="#FFF"/><circle cx="15" cy="18" r="0.6" fill="#FFF"/></svg>
<div class="a" style="left:1538px;top:1048px;line-height:24px;font-size:14.4px;color:#FFFFFF;white-space:pre;">Weather alert</div>
<svg style="left:1646px;top:1054px" width="14" height="10" viewBox="0 0 14 10"><path d="M1 8.5 L7 2 L13 8.5" fill="none" stroke="#FFFFFF" stroke-width="1.2"/></svg>
<svg style="left:1671px;top:1051px" width="14" height="18" viewBox="0 0 14 18"><path d="M3 1.5 H9 M3 16.5 H9" stroke="#FFFFFF" stroke-width="1"/><rect x="1" y="4" width="8" height="10" rx="3" fill="none" stroke="#FFFFFF" stroke-width="1.1"/><path d="M9 8 L12.5 6 V12 L9 10" fill="none" stroke="#FFFFFF" stroke-width="1.1"/></svg>
<svg style="left:1692px;top:1053px" width="20" height="16" viewBox="0 0 20 16"><path d="M2 11 C0.5 11 0.5 7 3 7 C3.5 4 7 3 9 5 C10.5 2.5 15 3 15 7 C17 7 17.5 10 16 11 Z" fill="#D8D8D8"/><circle cx="13.5" cy="11.5" r="4.3" fill="#3A8EE6"/><path d="M11.3 11 C11.5 9.5 13.5 9 14.8 10 M15.7 12 C15.5 13.5 13.5 14 12.2 13" fill="none" stroke="#FFFFFF" stroke-width="0.9"/></svg>
<svg style="left:1716px;top:1052px" width="18" height="16" viewBox="0 0 18 16"><rect x="5" y="3" width="12" height="8.5" fill="none" stroke="#FFFFFF" stroke-width="1.1"/><path d="M11 11.5 V14 M7.5 14.5 H14.5 M1 1 H4 V6 H1 Z" fill="none" stroke="#FFFFFF" stroke-width="1"/></svg>
<svg style="left:1740px;top:1052px" width="18" height="16" viewBox="0 0 18 16"><path d="M1.5 5.5 H4.5 L8.5 2 V14 L4.5 10.5 H1.5 Z" fill="none" stroke="#FFFFFF" stroke-width="1.1" stroke-linejoin="round"/><path d="M11 5.5 C12 6.5 12 9.5 11 10.5 M13.2 3.8 C15 5.5 15 10.5 13.2 12.2 M15.3 2 C17.8 4.5 17.8 11.5 15.3 14" fill="none" stroke="#FFFFFF" stroke-width="1" opacity="0.85"/></svg>
<div class="a" style="left:1767px;top:1048px;line-height:24px;font-size:12.2px;color:#FFFFFF;white-space:pre;">ENG</div>
<div class="a" style="left:1799px;top:1038.5px;width:66px;text-align:center;line-height:24px;font-size:12.2px;color:#FFFFFF;white-space:pre;">06:10 PM</div>
<div class="a" style="left:1799px;top:1057px;width:66px;text-align:center;line-height:24px;font-size:12px;color:#FFFFFF;white-space:pre;">12-07-2024</div>
<svg style="left:1878px;top:1051px" width="18" height="18" viewBox="0 0 18 18"><path d="M1 1 H17 V13 H12 L9 16.5 L6 13 H1 Z" fill="#FFFFFF"/><path d="M4 4.5 H14 M4 7 H14 M4 9.5 H11" stroke="#222" stroke-width="1"/></svg>
<div class="a" style="left:1915px;top:1040px;width:1px;height:40px;background:#555;"></div>

<div class="a" style="left:41px;top:302px;width:353px;height:48px;background:#283428;"></div>
<div class="a" style="left:53px;top:230px;width:329px;height:24px;background:#43454A;border-radius:4px;"></div>
<div class="a" style="left:0;top:82px;width:394px;height:928px;overflow:hidden;">
<svg style="left:56px;top:11px" width="10" height="10" viewBox="0 0 10 10"><path d="M1 3 L5 7 L9 3" fill="none" stroke="#A8ABB0" stroke-width="1.2" stroke-linecap="round" stroke-linejoin="round"/></svg><svg style="left:74px;top:8px" width="17" height="16" viewBox="0 0 17 16"><path d="M1 2.6 C1 2.2 1.3 1.9 1.7 1.9 H5.3 L6.9 3.5 H13.3 C13.7 3.5 14 3.8 14 4.2 V13.3 C14 13.7 13.7 14 13.3 14 H1.7 C1.3 14 1 13.7 1 13.3 Z" fill="#3E4044" stroke="#DFE1E5" stroke-width="1.1" stroke-linejoin="round"/><rect x="7.6" y="8" width="8.4" height="8.4" rx="1.8" fill="#2B2D30"/><rect x="8.8" y="9.2" width="6" height="6" rx="1.3" fill="#243A2B" stroke="#3DDC84" stroke-width="1.3"/></svg><div class="a ui" style="left:93px;top:4px;line-height:24px;">app<span class="g"></span></div>
<svg style="left:74px;top:35px" width="10" height="10" viewBox="0 0 10 10"><path d="M3 1 L7 5 L3 9" fill="none" stroke="#A8ABB0" stroke-width="1.2" stroke-linecap="round" stroke-linejoin="round"/></svg><svg style="left:93px;top:32px" width="16" height="16" viewBox="0 0 16 16"><path d="M1.5 3.5 h4.2 l1.5 1.5 h7.3 v8.5 h-13 z" fill="#25324D" stroke="#548AF7" stroke-width="1.1" stroke-linejoin="round"/></svg><div class="a ui" style="left:112px;top:28px;line-height:24px;">manifests<span class="g"></span></div>
<svg style="left:74px;top:59px" width="10" height="10" viewBox="0 0 10 10"><path d="M1 3 L5 7 L9 3" fill="none" stroke="#A8ABB0" stroke-width="1.2" stroke-linecap="round" stroke-linejoin="round"/></svg><svg style="left:93px;top:56px" width="16" height="16" viewBox="0 0 16 16"><path d="M1.5 3.5 h4.2 l1.5 1.5 h7.3 v8.5 h-13 z" fill="#25324D" stroke="#548AF7" stroke-width="1.1" stroke-linejoin="round"/></svg><div class="a ui" style="left:112px;top:52px;line-height:24px;">kotlin+java<span class="g"></span></div>
<svg style="left:94px;top:83px" width="10" height="10" viewBox="0 0 10 10"><path d="M1 3 L5 7 L9 3" fill="none" stroke="#A8ABB0" stroke-width="1.2" stroke-linecap="round" stroke-linejoin="round"/></svg><svg style="left:113px;top:80px" width="17" height="16" viewBox="0 0 17 16"><path d="M1 2.6 C1 2.2 1.3 1.9 1.7 1.9 H5.3 L6.9 3.5 H13.3 C13.7 3.5 14 3.8 14 4.2 V13.3 C14 13.7 13.7 14 13.3 14 H1.7 C1.3 14 1 13.7 1 13.3 Z" fill="#3E4044" stroke="#DFE1E5" stroke-width="1.1" stroke-linejoin="round"/><circle cx="4.8" cy="9.3" r="1.8" fill="none" stroke="#DFE1E5" stroke-width="1.05"/></svg><div class="a ui" style="left:131px;top:76px;line-height:24px;">com.example.dashboard<span class="g"></span></div>
<svg style="left:113px;top:107px" width="10" height="10" viewBox="0 0 10 10"><path d="M1 3 L5 7 L9 3" fill="none" stroke="#A8ABB0" stroke-width="1.2" stroke-linecap="round" stroke-linejoin="round"/></svg><svg style="left:132px;top:104px" width="17" height="16" viewBox="0 0 17 16"><path d="M1 2.6 C1 2.2 1.3 1.9 1.7 1.9 H5.3 L6.9 3.5 H13.3 C13.7 3.5 14 3.8 14 4.2 V13.3 C14 13.7 13.7 14 13.3 14 H1.7 C1.3 14 1 13.7 1 13.3 Z" fill="#3E4044" stroke="#DFE1E5" stroke-width="1.1" stroke-linejoin="round"/><circle cx="4.8" cy="9.3" r="1.8" fill="none" stroke="#DFE1E5" stroke-width="1.05"/></svg><div class="a ui" style="left:150px;top:100px;line-height:24px;">ui.theme<span class="g"></span></div>
<svg style="left:152px;top:128px" width="16" height="16" viewBox="0 0 16 16"><path d="M1.5 2.5 h11 l-5 5.5 l5 5.5 h-11 z" fill="#2F2A3D" stroke="#B282F7" stroke-width="1.2" stroke-linejoin="round"/></svg><div class="a ui" style="left:169px;top:124px;line-height:24px;">Color.kt<span class="g"></span></div>
<svg style="left:152px;top:152px" width="16" height="16" viewBox="0 0 16 16"><path d="M1.5 2.5 h11 l-5 5.5 l5 5.5 h-11 z" fill="#2F2A3D" stroke="#B282F7" stroke-width="1.2" stroke-linejoin="round"/></svg><div class="a ui" style="left:169px;top:148px;line-height:24px;">Theme.kt<span class="g"></span></div>
<svg style="left:152px;top:176px" width="16" height="16" viewBox="0 0 16 16"><path d="M1.5 2.5 h11 l-5 5.5 l5 5.5 h-11 z" fill="#2F2A3D" stroke="#B282F7" stroke-width="1.2" stroke-linejoin="round"/></svg><div class="a ui" style="left:169px;top:172px;line-height:24px;">Type.kt<span class="g"></span></div>
<svg style="left:133px;top:200px" width="16" height="16" viewBox="0 0 16 16"><path d="M1.5 2.5 h11 l-5 5.5 l5 5.5 h-11 z" fill="#2F2A3D" stroke="#B282F7" stroke-width="1.2" stroke-linejoin="round"/></svg><div class="a ui" style="left:150px;top:196px;line-height:24px;">MainActivity.kt<span class="g"></span></div>
<svg style="left:94px;top:227px" width="10" height="10" viewBox="0 0 10 10"><path d="M3 1 L7 5 L3 9" fill="none" stroke="#A8ABB0" stroke-width="1.2" stroke-linecap="round" stroke-linejoin="round"/></svg><svg style="left:113px;top:224px" width="17" height="16" viewBox="0 0 17 16"><path d="M1 2.6 C1 2.2 1.3 1.9 1.7 1.9 H5.3 L6.9 3.5 H13.3 C13.7 3.5 14 3.8 14 4.2 V13.3 C14 13.7 13.7 14 13.3 14 H1.7 C1.3 14 1 13.7 1 13.3 Z" fill="#3E4044" stroke="#DFE1E5" stroke-width="1.1" stroke-linejoin="round"/><circle cx="4.8" cy="9.3" r="1.8" fill="none" stroke="#DFE1E5" stroke-width="1.05"/></svg><div class="a ui" style="left:131px;top:220px;line-height:24px;">com.example.dashboard<span class="g"> (androidTest)</span></div>
<svg style="left:94px;top:251px" width="10" height="10" viewBox="0 0 10 10"><path d="M3 1 L7 5 L3 9" fill="none" stroke="#A8ABB0" stroke-width="1.2" stroke-linecap="round" stroke-linejoin="round"/></svg><svg style="left:113px;top:248px" width="17" height="16" viewBox="0 0 17 16"><path d="M1 2.6 C1 2.2 1.3 1.9 1.7 1.9 H5.3 L6.9 3.5 H13.3 C13.7 3.5 14 3.8 14 4.2 V13.3 C14 13.7 13.7 14 13.3 14 H1.7 C1.3 14 1 13.7 1 13.3 Z" fill="#3E4044" stroke="#DFE1E5" stroke-width="1.1" stroke-linejoin="round"/><circle cx="4.8" cy="9.3" r="1.8" fill="none" stroke="#DFE1E5" stroke-width="1.05"/></svg><div class="a ui" style="left:131px;top:244px;line-height:24px;">com.example.dashboard<span class="g"> (test)</span></div>
<svg style="left:74px;top:275px" width="10" height="10" viewBox="0 0 10 10"><path d="M1 3 L5 7 L9 3" fill="none" stroke="#A8ABB0" stroke-width="1.2" stroke-linecap="round" stroke-linejoin="round"/></svg><svg style="left:93px;top:272px" width="17" height="16" viewBox="0 0 17 16"><path d="M1 2.6 C1 2.2 1.3 1.9 1.7 1.9 H5.3 L6.9 3.5 H13.3 C13.7 3.5 14 3.8 14 4.2 V13.3 C14 13.7 13.7 14 13.3 14 H1.7 C1.3 14 1 13.7 1 13.3 Z" fill="#3E4044" stroke="#DFE1E5" stroke-width="1.1" stroke-linejoin="round"/><rect x="8" y="9" width="9" height="7" fill="#2B2D30"/><path d="M9.2 10.6h6.8M9.2 12.6h6.8M9.2 14.6h6.8" stroke="#F2C55C" stroke-width="1.2"/></svg><div class="a ui" style="left:112px;top:268px;line-height:24px;">res<span class="g"></span></div>
<svg style="left:94px;top:299px" width="10" height="10" viewBox="0 0 10 10"><path d="M1 3 L5 7 L9 3" fill="none" stroke="#A8ABB0" stroke-width="1.2" stroke-linecap="round" stroke-linejoin="round"/></svg><svg style="left:113px;top:296px" width="17" height="16" viewBox="0 0 17 16"><path d="M1 2.6 C1 2.2 1.3 1.9 1.7 1.9 H5.3 L6.9 3.5 H13.3 C13.7 3.5 14 3.8 14 4.2 V13.3 C14 13.7 13.7 14 13.3 14 H1.7 C1.3 14 1 13.7 1 13.3 Z" fill="#3E4044" stroke="#DFE1E5" stroke-width="1.1" stroke-linejoin="round"/><circle cx="4.8" cy="9.3" r="1.8" fill="none" stroke="#DFE1E5" stroke-width="1.05"/></svg><div class="a ui" style="left:131px;top:292px;line-height:24px;">drawable<span class="g"></span></div>
<svg style="left:133px;top:320px" width="16" height="16" viewBox="0 0 16 16"><rect x="1.5" y="2.5" width="11.5" height="11.5" rx="1" fill="#25324D" stroke="#548AF7" stroke-width="1.2"/><circle cx="9.5" cy="5.8" r="1.4" fill="none" stroke="#548AF7" stroke-width="1.1"/><path d="M1.8 8.5 L6.5 13.5 M1.8 12 L5.5 8.5 L12.8 13.8" fill="none" stroke="#548AF7" stroke-width="1.1"/></svg><div class="a ui" style="left:150px;top:316px;line-height:24px;">arc_1.png<span class="g"></span></div>
<svg style="left:133px;top:344px" width="16" height="16" viewBox="0 0 16 16"><rect x="1.5" y="2.5" width="11.5" height="11.5" rx="1" fill="#25324D" stroke="#548AF7" stroke-width="1.2"/><circle cx="9.5" cy="5.8" r="1.4" fill="none" stroke="#548AF7" stroke-width="1.1"/><path d="M1.8 8.5 L6.5 13.5 M1.8 12 L5.5 8.5 L12.8 13.8" fill="none" stroke="#548AF7" stroke-width="1.1"/></svg><div class="a ui" style="left:150px;top:340px;line-height:24px;">calendar.png<span class="g"></span></div>
<svg style="left:133px;top:368px" width="16" height="16" viewBox="0 0 16 16"><rect x="1.5" y="2.5" width="11.5" height="11.5" rx="1" fill="#25324D" stroke="#548AF7" stroke-width="1.2"/><circle cx="9.5" cy="5.8" r="1.4" fill="none" stroke="#548AF7" stroke-width="1.1"/><path d="M1.8 8.5 L6.5 13.5 M1.8 12 L5.5 8.5 L12.8 13.8" fill="none" stroke="#548AF7" stroke-width="1.1"/></svg><div class="a ui" style="left:150px;top:364px;line-height:24px;">contact.png<span class="g"></span></div>
<svg style="left:133px;top:392px" width="16" height="16" viewBox="0 0 16 16"><rect x="1.5" y="2.5" width="11.5" height="11.5" rx="1" fill="#25324D" stroke="#548AF7" stroke-width="1.2"/><circle cx="9.5" cy="5.8" r="1.4" fill="none" stroke="#548AF7" stroke-width="1.1"/><path d="M1.8 8.5 L6.5 13.5 M1.8 12 L5.5 8.5 L12.8 13.8" fill="none" stroke="#548AF7" stroke-width="1.1"/></svg><div class="a ui" style="left:150px;top:388px;line-height:24px;">cv.png<span class="g"></span></div>
<svg style="left:131px;top:416px" width="18" height="16" viewBox="0 0 18 16"><path d="M5 4 L1.5 8 L5 12 M13 4 L16.5 8 L13 12 M10.5 3 L7.5 13" fill="none" stroke="#E08855" stroke-width="1.2" stroke-linecap="round" stroke-linejoin="round"/></svg><div class="a ui" style="left:150px;top:412px;line-height:24px;">ic_launcher_background.xml<span class="g"></span></div>
<svg style="left:131px;top:440px" width="18" height="16" viewBox="0 0 18 16"><path d="M5 4 L1.5 8 L5 12 M13 4 L16.5 8 L13 12 M10.5 3 L7.5 13" fill="none" stroke="#E08855" stroke-width="1.2" stroke-linecap="round" stroke-linejoin="round"/></svg><div class="a ui" style="left:150px;top:436px;line-height:24px;">ic_launcher_foreground.xml<span class="g"></span></div>
<svg style="left:133px;top:464px" width="16" height="16" viewBox="0 0 16 16"><rect x="1.5" y="2.5" width="11.5" height="11.5" rx="1" fill="#25324D" stroke="#548AF7" stroke-width="1.2"/><circle cx="9.5" cy="5.8" r="1.4" fill="none" stroke="#548AF7" stroke-width="1.1"/><path d="M1.8 8.5 L6.5 13.5 M1.8 12 L5.5 8.5 L12.8 13.8" fill="none" stroke="#548AF7" stroke-width="1.1"/></svg><div class="a ui" style="left:150px;top:460px;line-height:24px;">instagram.png<span class="g"></span></div>
<svg style="left:133px;top:488px" width="16" height="16" viewBox="0 0 16 16"><rect x="1.5" y="2.5" width="11.5" height="11.5" rx="1" fill="#25324D" stroke="#548AF7" stroke-width="1.2"/><circle cx="9.5" cy="5.8" r="1.4" fill="none" stroke="#548AF7" stroke-width="1.1"/><path d="M1.8 8.5 L6.5 13.5 M1.8 12 L5.5 8.5 L12.8 13.8" fill="none" stroke="#548AF7" stroke-width="1.1"/></svg><div class="a ui" style="left:150px;top:484px;line-height:24px;">notification.png<span class="g"></span></div>
<svg style="left:133px;top:512px" width="16" height="16" viewBox="0 0 16 16"><rect x="1.5" y="2.5" width="11.5" height="11.5" rx="1" fill="#25324D" stroke="#548AF7" stroke-width="1.2"/><circle cx="9.5" cy="5.8" r="1.4" fill="none" stroke="#548AF7" stroke-width="1.1"/><path d="M1.8 8.5 L6.5 13.5 M1.8 12 L5.5 8.5 L12.8 13.8" fill="none" stroke="#548AF7" stroke-width="1.1"/></svg><div class="a ui" style="left:150px;top:508px;line-height:24px;">profile.png<span class="g"></span></div>
<svg style="left:133px;top:536px" width="16" height="16" viewBox="0 0 16 16"><rect x="1.5" y="2.5" width="11.5" height="11.5" rx="1" fill="#25324D" stroke="#548AF7" stroke-width="1.2"/><circle cx="9.5" cy="5.8" r="1.4" fill="none" stroke="#548AF7" stroke-width="1.1"/><path d="M1.8 8.5 L6.5 13.5 M1.8 12 L5.5 8.5 L12.8 13.8" fill="none" stroke="#548AF7" stroke-width="1.1"/></svg><div class="a ui" style="left:150px;top:532px;line-height:24px;">share.png<span class="g"></span></div>
<svg style="left:94px;top:563px" width="10" height="10" viewBox="0 0 10 10"><path d="M3 1 L7 5 L3 9" fill="none" stroke="#A8ABB0" stroke-width="1.2" stroke-linecap="round" stroke-linejoin="round"/></svg><svg style="left:113px;top:560px" width="17" height="16" viewBox="0 0 17 16"><path d="M1 2.6 C1 2.2 1.3 1.9 1.7 1.9 H5.3 L6.9 3.5 H13.3 C13.7 3.5 14 3.8 14 4.2 V13.3 C14 13.7 13.7 14 13.3 14 H1.7 C1.3 14 1 13.7 1 13.3 Z" fill="#3E4044" stroke="#DFE1E5" stroke-width="1.1" stroke-linejoin="round"/><circle cx="4.8" cy="9.3" r="1.8" fill="none" stroke="#DFE1E5" stroke-width="1.05"/></svg><div class="a ui" style="left:131px;top:556px;line-height:24px;">mipmap<span class="g"></span></div>
<svg style="left:94px;top:587px" width="10" height="10" viewBox="0 0 10 10"><path d="M1 3 L5 7 L9 3" fill="none" stroke="#A8ABB0" stroke-width="1.2" stroke-linecap="round" stroke-linejoin="round"/></svg><svg style="left:113px;top:584px" width="17" height="16" viewBox="0 0 17 16"><path d="M1 2.6 C1 2.2 1.3 1.9 1.7 1.9 H5.3 L6.9 3.5 H13.3 C13.7 3.5 14 3.8 14 4.2 V13.3 C14 13.7 13.7 14 13.3 14 H1.7 C1.3 14 1 13.7 1 13.3 Z" fill="#3E4044" stroke="#DFE1E5" stroke-width="1.1" stroke-linejoin="round"/><circle cx="4.8" cy="9.3" r="1.8" fill="none" stroke="#DFE1E5" stroke-width="1.05"/></svg><div class="a ui" style="left:131px;top:580px;line-height:24px;">values<span class="g"></span></div>
<svg style="left:131px;top:608px" width="18" height="16" viewBox="0 0 18 16"><path d="M5 4 L1.5 8 L5 12 M13 4 L16.5 8 L13 12 M10.5 3 L7.5 13" fill="none" stroke="#E08855" stroke-width="1.2" stroke-linecap="round" stroke-linejoin="round"/></svg><div class="a ui" style="left:150px;top:604px;line-height:24px;">colors.xml<span class="g"></span></div>
<svg style="left:131px;top:632px" width="18" height="16" viewBox="0 0 18 16"><path d="M5 4 L1.5 8 L5 12 M13 4 L16.5 8 L13 12 M10.5 3 L7.5 13" fill="none" stroke="#E08855" stroke-width="1.2" stroke-linecap="round" stroke-linejoin="round"/></svg><div class="a ui" style="left:150px;top:628px;line-height:24px;">strings.xml<span class="g"></span></div>
<svg style="left:131px;top:656px" width="18" height="16" viewBox="0 0 18 16"><path d="M5 4 L1.5 8 L5 12 M13 4 L16.5 8 L13 12 M10.5 3 L7.5 13" fill="none" stroke="#E08855" stroke-width="1.2" stroke-linecap="round" stroke-linejoin="round"/></svg><div class="a ui" style="left:150px;top:652px;line-height:24px;">themes.xml<span class="g"></span></div>
<svg style="left:94px;top:683px" width="10" height="10" viewBox="0 0 10 10"><path d="M3 1 L7 5 L3 9" fill="none" stroke="#A8ABB0" stroke-width="1.2" stroke-linecap="round" stroke-linejoin="round"/></svg><svg style="left:113px;top:680px" width="17" height="16" viewBox="0 0 17 16"><path d="M1 2.6 C1 2.2 1.3 1.9 1.7 1.9 H5.3 L6.9 3.5 H13.3 C13.7 3.5 14 3.8 14 4.2 V13.3 C14 13.7 13.7 14 13.3 14 H1.7 C1.3 14 1 13.7 1 13.3 Z" fill="#3E4044" stroke="#DFE1E5" stroke-width="1.1" stroke-linejoin="round"/><circle cx="4.8" cy="9.3" r="1.8" fill="none" stroke="#DFE1E5" stroke-width="1.05"/></svg><div class="a ui" style="left:131px;top:676px;line-height:24px;">xml<span class="g"></span></div>
<svg style="left:93px;top:704px" width="17" height="16" viewBox="0 0 17 16"><path d="M1 2.6 C1 2.2 1.3 1.9 1.7 1.9 H5.3 L6.9 3.5 H13.3 C13.7 3.5 14 3.8 14 4.2 V13.3 C14 13.7 13.7 14 13.3 14 H1.7 C1.3 14 1 13.7 1 13.3 Z" fill="#3E4044" stroke="#DFE1E5" stroke-width="1.1" stroke-linejoin="round"/><rect x="8" y="9" width="9" height="7" fill="#2B2D30"/><path d="M9.2 10.6h6.8M9.2 12.6h6.8M9.2 14.6h6.8" stroke="#F2C55C" stroke-width="1.2"/></svg><div class="a ui" style="left:112px;top:700px;line-height:24px;">res<span class="g"> (generated)</span></div>
<svg style="left:56px;top:731px" width="10" height="10" viewBox="0 0 10 10"><path d="M1 3 L5 7 L9 3" fill="none" stroke="#A8ABB0" stroke-width="1.2" stroke-linecap="round" stroke-linejoin="round"/></svg><svg style="left:74px;top:728px" width="16" height="16" viewBox="0 0 16 16"><g transform="translate(0,1) scale(0.8)"><path d="M1.2 15 C0.6 10.5 2.5 6 7 4.6 C10 3.7 12.3 4.2 14 5.5 C15 6.3 15.2 7.5 15 9 L14.2 15 C13.4 14 12.6 13.3 11.6 13.3 C10.6 13.3 9.6 14 9 15 C8.2 14 7.3 13.3 6.3 13.3 C5.3 13.3 4.2 14 3.6 15 C2.8 14.3 2 14.3 1.2 15 Z M15 9 C17.5 8.5 19 6.5 18.8 4 C18.6 2.3 17.3 1.3 16 2 M9.2 5.2 C8.3 7.6 8.8 9.6 10.8 10.2" fill="none" stroke="#CED0D6" stroke-width="1.3" stroke-linejoin="round" stroke-linecap="round"/><circle cx="12.6" cy="7.6" r="0.6" fill="#CED0D6"/></g></svg><div class="a ui" style="left:93px;top:724px;line-height:24px;">Gradle Scripts<span class="g"></span></div>
<svg style="left:93px;top:752px" width="16" height="16" viewBox="0 0 16 16"><g transform="translate(0,1) scale(0.8)"><path d="M1.2 15 C0.6 10.5 2.5 6 7 4.6 C10 3.7 12.3 4.2 14 5.5 C15 6.3 15.2 7.5 15 9 L14.2 15 C13.4 14 12.6 13.3 11.6 13.3 C10.6 13.3 9.6 14 9 15 C8.2 14 7.3 13.3 6.3 13.3 C5.3 13.3 4.2 14 3.6 15 C2.8 14.3 2 14.3 1.2 15 Z M15 9 C17.5 8.5 19 6.5 18.8 4 C18.6 2.3 17.3 1.3 16 2 M9.2 5.2 C8.3 7.6 8.8 9.6 10.8 10.2" fill="none" stroke="#CED0D6" stroke-width="1.3" stroke-linejoin="round" stroke-linecap="round"/><circle cx="12.6" cy="7.6" r="0.6" fill="#CED0D6"/></g><path d="M9.5 9.5 h5 l-2.5 2.8 l2.5 2.8 h-5z" fill="#2B2D30" stroke="#B282F7" stroke-width="1.1"/></svg><div class="a ui" style="left:112px;top:748px;line-height:24px;">build.gradle.kts<span class="g"> (Project: Dashboard)</span></div>
<svg style="left:93px;top:776px" width="16" height="16" viewBox="0 0 16 16"><g transform="translate(0,1) scale(0.8)"><path d="M1.2 15 C0.6 10.5 2.5 6 7 4.6 C10 3.7 12.3 4.2 14 5.5 C15 6.3 15.2 7.5 15 9 L14.2 15 C13.4 14 12.6 13.3 11.6 13.3 C10.6 13.3 9.6 14 9 15 C8.2 14 7.3 13.3 6.3 13.3 C5.3 13.3 4.2 14 3.6 15 C2.8 14.3 2 14.3 1.2 15 Z M15 9 C17.5 8.5 19 6.5 18.8 4 C18.6 2.3 17.3 1.3 16 2 M9.2 5.2 C8.3 7.6 8.8 9.6 10.8 10.2" fill="none" stroke="#CED0D6" stroke-width="1.3" stroke-linejoin="round" stroke-linecap="round"/><circle cx="12.6" cy="7.6" r="0.6" fill="#CED0D6"/></g><path d="M9.5 9.5 h5 l-2.5 2.8 l2.5 2.8 h-5z" fill="#2B2D30" stroke="#B282F7" stroke-width="1.1"/></svg><div class="a ui" style="left:112px;top:772px;line-height:24px;">build.gradle.kts<span class="g"> (Module :app)</span></div>
<svg style="left:93px;top:800px" width="16" height="16" viewBox="0 0 16 16"><path d="M2 4h12M2 7h9M2 10h12M2 13h8" stroke="#CED0D6" stroke-width="1.1"/></svg><div class="a ui" style="left:112px;top:796px;line-height:24px;">proguard-rules.pro<span class="g"> (ProGuard Rules for &quot;:app&quot;)</span></div>
<svg style="left:93px;top:824px" width="16" height="16" viewBox="0 0 16 16"><path d="M8 1.8 l1.3 1.4 l1.9 -.3 l.5 1.8 l1.8 .7 l-.4 1.9 l1.2 1.4 l-1.2 1.4 l.4 1.9 l-1.8 .7 l-.5 1.8 l-1.9 -.3 l-1.3 1.4 l-1.3 -1.4 l-1.9 .3 l-.5 -1.8 l-1.8 -.7 l.4 -1.9 l-1.2 -1.4 l1.2 -1.4 l-.4 -1.9 l1.8 -.7 l.5 -1.8 l1.9 .3z" fill="none" stroke="#CED0D6" stroke-width="1.05" stroke-linejoin="round"/><circle cx="8" cy="8.6" r="2.2" fill="none" stroke="#CED0D6" stroke-width="1.05"/></svg><div class="a ui" style="left:112px;top:820px;line-height:24px;">gradle.properties<span class="g"> (Project Properties)</span></div>
<svg style="left:93px;top:848px" width="16" height="16" viewBox="0 0 16 16"><path d="M8 1.8 l1.3 1.4 l1.9 -.3 l.5 1.8 l1.8 .7 l-.4 1.9 l1.2 1.4 l-1.2 1.4 l.4 1.9 l-1.8 .7 l-.5 1.8 l-1.9 -.3 l-1.3 1.4 l-1.3 -1.4 l-1.9 .3 l-.5 -1.8 l-1.8 -.7 l.4 -1.9 l-1.2 -1.4 l1.2 -1.4 l-.4 -1.9 l1.8 -.7 l.5 -1.8 l1.9 .3z" fill="none" stroke="#CED0D6" stroke-width="1.05" stroke-linejoin="round"/><circle cx="8" cy="8.6" r="2.2" fill="none" stroke="#CED0D6" stroke-width="1.05"/></svg><div class="a ui" style="left:112px;top:844px;line-height:24px;">gradle-wrapper.properties<span class="g"> (Gradle Version)</span></div>
<svg style="left:93px;top:872px" width="16" height="16" viewBox="0 0 16 16"><rect x="2" y="2.5" width="12" height="12" rx="1.5" fill="#25324D" stroke="#548AF7" stroke-width="1.1"/><path d="M5 5.5h6M8 5.5v6.5" stroke="#548AF7" stroke-width="1.3"/></svg><div class="a ui" style="left:112px;top:868px;line-height:24px;">libs.versions.toml<span class="g"> (Version Catalog)</span></div>
<svg style="left:93px;top:896px" width="16" height="16" viewBox="0 0 16 16"><path d="M8 1.8 l1.3 1.4 l1.9 -.3 l.5 1.8 l1.8 .7 l-.4 1.9 l1.2 1.4 l-1.2 1.4 l.4 1.9 l-1.8 .7 l-.5 1.8 l-1.9 -.3 l-1.3 1.4 l-1.3 -1.4 l-1.9 .3 l-.5 -1.8 l-1.8 -.7 l.4 -1.9 l-1.2 -1.4 l1.2 -1.4 l-.4 -1.9 l1.8 -.7 l.5 -1.8 l1.9 .3z" fill="none" stroke="#CED0D6" stroke-width="1.05" stroke-linejoin="round"/><circle cx="8" cy="8.6" r="2.2" fill="none" stroke="#CED0D6" stroke-width="1.05"/></svg><div class="a ui" style="left:112px;top:892px;line-height:24px;">local.properties<span class="g"> (SDK Location)</span></div>
<svg style="left:93px;top:920px" width="16" height="16" viewBox="0 0 16 16"><g transform="translate(0,1) scale(0.8)"><path d="M1.2 15 C0.6 10.5 2.5 6 7 4.6 C10 3.7 12.3 4.2 14 5.5 C15 6.3 15.2 7.5 15 9 L14.2 15 C13.4 14 12.6 13.3 11.6 13.3 C10.6 13.3 9.6 14 9 15 C8.2 14 7.3 13.3 6.3 13.3 C5.3 13.3 4.2 14 3.6 15 C2.8 14.3 2 14.3 1.2 15 Z M15 9 C17.5 8.5 19 6.5 18.8 4 C18.6 2.3 17.3 1.3 16 2 M9.2 5.2 C8.3 7.6 8.8 9.6 10.8 10.2" fill="none" stroke="#CED0D6" stroke-width="1.3" stroke-linejoin="round" stroke-linecap="round"/><circle cx="12.6" cy="7.6" r="0.6" fill="#CED0D6"/></g><path d="M9.5 9.5 h5 l-2.5 2.8 l2.5 2.8 h-5z" fill="#2B2D30" stroke="#B282F7" stroke-width="1.1"/></svg><div class="a ui" style="left:112px;top:916px;line-height:24px;">settings.gradle.kts<span class="g"> (Project Settings)</span></div>
</div>
<div class="ln" style="left:372px;top:82.6px;">42</div>
<div class="code" style="left:489px;top:82.6px;"><span class="k">fun</span> <span class="f">ProfileScreen</span>(modifier: Modifier = Modifier) {</div>
<div class="ln" style="left:372px;top:104.6px;">49</div>
<div class="code" style="left:521px;top:104.6px;">) {</div>
<div class="ln" style="left:372px;top:126.6px;">54</div>
<div class="code" style="left:553px;top:126.6px;">){</div>
<div class="a" style="left:394px;top:149px;width:1485px;height:861px;overflow:hidden;">
<div class="a" style="left:92px;top:0px;width:1px;height:861px;background:#313438;"></div>
<div class="a" style="left:125px;top:0px;width:1px;height:861px;background:#313438;"></div>
<div class="a" style="left:157px;top:0px;width:1px;height:156px;background:#313438;"></div>
<div class="a" style="left:157px;top:200px;width:1px;height:88px;background:#313438;"></div>
<div class="a" style="left:157px;top:332px;width:1px;height:44px;background:#313438;"></div>
<div class="a" style="left:157px;top:420px;width:1px;height:110px;background:#313438;"></div>
<div class="a" style="left:157px;top:574px;width:1px;height:110px;background:#313438;"></div>
<div class="a" style="left:157px;top:706px;width:1px;height:155px;background:#313438;"></div>
<div class="a" style="left:189px;top:0px;width:1px;height:134px;background:#313438;"></div>
<div class="a" style="left:189px;top:442px;width:1px;height:66px;background:#313438;"></div>
<div class="a" style="left:189px;top:596px;width:1px;height:66px;background:#313438;"></div>
<div class="a" style="left:189px;top:728px;width:1px;height:133px;background:#313438;"></div>
<div class="a" style="left:221px;top:24px;width:1px;height:110px;background:#313438;"></div>
<div class="a" style="left:221px;top:794px;width:1px;height:67px;background:#313438;"></div>
<div class="a" style="left:253px;top:46px;width:1px;height:66px;background:#313438;"></div>
<div class="ln" style="left:-22px;top:3.4000000000000057px;">73</div>
<div class="code" style="left:223px;top:3.4000000000000057px;"><span class="n">modifier</span> = Modifier</div>
<div class="ln" style="left:-22px;top:25.400000000000006px;">74</div>
<div class="code" style="left:255px;top:25.400000000000006px;">.<span class="e">constrainAs</span>(title){</div>
<div class="ln" style="left:-22px;top:47.400000000000006px;">75</div>
<div class="code" style="left:287px;top:47.400000000000006px;"><span class="p">top</span>.linkTo(<span class="p">parent</span>.<span class="p">top</span>, <span class="n">margin</span> = <span class="u">30</span>.<span class="pi">dp</span>)</div>
<div class="ln" style="left:-22px;top:69.4px;">76</div>
<div class="code" style="left:287px;top:69.4px;"><span class="p">start</span>.linkTo(<span class="p">parent</span>.<span class="p">start</span>)</div>
<div class="ln" style="left:-22px;top:91.4px;">77</div>
<div class="code" style="left:287px;top:91.4px;"><span class="p">end</span>.linkTo(<span class="p">parent</span>.<span class="p">end</span>)</div>
<div class="ln" style="left:-22px;top:113.39999999999998px;">78</div>
<div class="code" style="left:255px;top:113.39999999999998px;">}</div>
<div class="ln" style="left:-22px;top:135.39999999999998px;">79</div>
<div class="code" style="left:191px;top:135.39999999999998px;">)</div>
<div class="ln" style="left:-22px;top:157.39999999999998px;">80</div>
<div class="code" style="left:159px;top:157.39999999999998px;">}</div>
<div class="ln" style="left:-22px;top:179.39999999999998px;">81</div>
<div class="code" style="left:159px;top:179.39999999999998px;"><span class="c">Text</span>(<span class="n">text</span> = <span class="s">&quot;</span><span class="s wv">Bhadra</span><span class="s"> </span><span class="s wv">Vaghela</span><span class="s">&quot;</span>,</div>
<div class="ln" style="left:-22px;top:201.39999999999998px;">82</div>
<div class="code" style="left:191px;top:201.39999999999998px;"><span class="n">fontSize</span> = <span class="u">26</span>.<span class="pi">sp</span>,</div>
<div class="ln" style="left:-22px;top:223.39999999999998px;">83</div>
<div class="code" style="left:191px;top:223.39999999999998px;"><span class="n">fontWeight</span> = FontWeight.<span class="p">Bold</span>,</div>
<div class="ln" style="left:-22px;top:245.39999999999998px;">84</div>
<div class="code" style="left:191px;top:245.39999999999998px;"><span class="n">modifier</span> = Modifier.<span class="e">padding</span>(<span class="n">top</span>=<span class="u">16</span>.<span class="pi">dp</span>),</div>
<div class="ln" style="left:-22px;top:267.4px;">85</div>
<div class="code" style="left:191px;top:267.4px;"><span class="n">color</span> = <span class="it">Color</span>(android.graphics.Color.parseColor(<span style="display:inline-block;width:80px;height:18px;vertical-align:top;margin-top:1px;position:relative;"><span style="position:absolute;left:2px;top:0;width:74px;height:18px;background:#303134;border-radius:4px;"></span><span style="position:absolute;left:7px;top:0;font-family:'Liberation Sans',sans-serif;font-size:12.5px;letter-spacing:0;line-height:18px;color:#8C8F94;">colorString:</span></span><span class="s">&quot;#32357a&quot;</span>))</div>
<div class="ln" style="left:-22px;top:289.4px;">86</div>
<div class="code" style="left:159px;top:289.4px;">)</div>
<div class="ln" style="left:-22px;top:311.4px;">87</div>
<div class="code" style="left:159px;top:311.4px;"><span class="c">Text</span>(<span class="n">text</span> = <span class="s">&quot;codespark07@gmail.com&quot;</span>,</div>
<div class="ln" style="left:-22px;top:333.4px;">88</div>
<div class="code" style="left:191px;top:333.4px;"><span class="n">fontSize</span> = <span class="u">20</span>.<span class="pi">sp</span>,</div>
<div class="ln" style="left:-22px;top:355.4px;">89</div>
<div class="code" style="left:191px;top:355.4px;"><span class="n">color</span> = <span class="it">Color</span>(android.graphics.Color.parseColor(<span style="display:inline-block;width:80px;height:18px;vertical-align:top;margin-top:1px;position:relative;"><span style="position:absolute;left:2px;top:0;width:74px;height:18px;background:#303134;border-radius:4px;"></span><span style="position:absolute;left:7px;top:0;font-family:'Liberation Sans',sans-serif;font-size:12.5px;letter-spacing:0;line-height:18px;color:#8C8F94;">colorString:</span></span><span class="s">&quot;#747679&quot;</span>))</div>
<div class="ln" style="left:-22px;top:377.4px;">90</div>
<div class="code" style="left:159px;top:377.4px;">)</div>
<div class="ln" style="left:-22px;top:399.4px;">91</div>
<div class="code" style="left:159px;top:399.4px;"><span class="c">Row</span>(</div>
<div class="ln" style="left:-22px;top:421.4px;">92</div>
<div class="code" style="left:191px;top:421.4px;"><span class="n">modifier</span> = Modifier</div>
<div class="ln" style="left:-22px;top:443.4px;">93</div>
<div class="code" style="left:223px;top:443.4px;">.<span class="e">fillMaxWidth</span>()</div>
<div class="ln" style="left:-22px;top:465.4px;">94</div>
<div class="code" style="left:223px;top:465.4px;">.<span class="e">padding</span>(<span class="n">start</span> = <span class="u">32</span>.<span class="pi">dp</span>, <span class="n">end</span> = <span class="u">32</span>.<span class="pi">dp</span>, <span class="n">top</span> = <span class="u">32</span>.<span class="pi">dp</span>, <span class="n">bottom</span> = <span class="u">10</span>.<span class="pi">dp</span>)</div>
<div class="ln" style="left:-22px;top:487.4px;">95</div>
<div class="code" style="left:223px;top:487.4px;">.<span class="e">height</span>(<span class="u">55</span>.<span class="pi">dp</span>),</div>
<div class="ln" style="left:-22px;top:509.4px;">96</div>
<div class="code" style="left:191px;top:509.4px;"><span class="n">verticalAlignment</span> = Alignment.<span class="p">CenterVertically</span></div>
<div class="ln" style="left:-22px;top:531.4px;">97</div>
<div class="code" style="left:159px;top:531.4px;">) <span class="fold">{...}</span></div>
<div class="ln" style="left:-22px;top:553.4px;">114</div>
<div class="code" style="left:159px;top:553.4px;"><span class="c">Row</span>(</div>
<div class="ln" style="left:-22px;top:575.4px;">115</div>
<div class="code" style="left:191px;top:575.4px;"><span class="n">modifier</span> = Modifier</div>
<div class="ln" style="left:-22px;top:597.4px;">116</div>
<div class="code" style="left:223px;top:597.4px;">.<span class="e">fillMaxWidth</span>()</div>
<div class="ln" style="left:-22px;top:619.4px;">117</div>
<div class="code" style="left:223px;top:619.4px;">.<span class="e">padding</span>(<span class="n">start</span> = <span class="u">32</span>.<span class="pi">dp</span>, <span class="n">end</span> = <span class="u">32</span>.<span class="pi">dp</span>, <span class="n">top</span> = <span class="u">30</span>.<span class="pi">dp</span>, <span class="n">bottom</span> = <span class="u">10</span>.<span class="pi">dp</span>)</div>
<div class="ln" style="left:-22px;top:641.4px;">118</div>
<div class="code" style="left:223px;top:641.4px;">.<span class="e">height</span>(<span class="u">55</span>.<span class="pi">dp</span>),</div>
<div class="ln" style="left:-22px;top:663.4px;">119</div>
<div class="code" style="left:191px;top:663.4px;"><span class="n">verticalAlignment</span> = Alignment.<span class="p">CenterVertically</span></div>
<div class="ln" style="left:-22px;top:685.4px;">120</div>
<div class="code" style="left:159px;top:685.4px;">) {</div>
<div class="ln" style="left:-22px;top:707.4px;">121</div>
<div class="code" style="left:191px;top:707.4px;"><span class="c">Image</span>(</div>
<div class="ln" style="left:-22px;top:729.4px;">122</div>
<div class="code" style="left:223px;top:729.4px;"><span class="n">painter</span> = <span class="c">painterResource</span>(<span class="n">id</span> = R.drawable.<span class="pi ul">calendar</span>),</div>
<div class="ln" style="left:-22px;top:751.4px;">123</div>
<div class="code" style="left:223px;top:751.4px;"><span class="n">contentDescription</span> = <span class="k">null</span>,</div>
<div class="ln" style="left:-22px;top:773.4px;">124</div>
<div class="code" style="left:223px;top:773.4px;"><span class="n">modifier</span> = Modifier</div>
<div class="ln" style="left:-22px;top:795.4px;">125</div>
<div class="code" style="left:255px;top:795.4px;">.<span class="e">size</span>(<span class="u">60</span>.<span class="pi">dp</span>) <span class="cm">// specify the size of the image</span></div>
<div class="ln" style="left:-22px;top:817.4px;">126</div>
<div class="code" style="left:255px;top:817.4px;">.<span class="e">padding</span>(<span class="n">end</span> = <span class="u">16</span>.<span class="pi">dp</span>)</div>
<div class="ln" style="left:-22px;top:839.4px;">127</div>
<div class="code" style="left:255px;top:839.4px;">.<span class="e">clickable</span> { }</div>
<svg style="left:80px;top:535px" width="10" height="12" viewBox="0 0 10 12"><path d="M3 2 L7 6 L3 10" fill="none" stroke="#8C8F94" stroke-width="1.1" stroke-linecap="round" stroke-linejoin="round"/></svg>
<svg style="left:52px;top:732px" width="16" height="14" viewBox="0 0 16 14"><rect x="1" y="1" width="14" height="12" fill="#1E1F22" stroke="#DFE1E5" stroke-width="1.1"/><path d="M3 10 L6 5.5 L8.5 8.5 L10 7 L13 10 Z" fill="none" stroke="#DFE1E5" stroke-width="1"/></svg>
</div>

</div>
</body></html>
